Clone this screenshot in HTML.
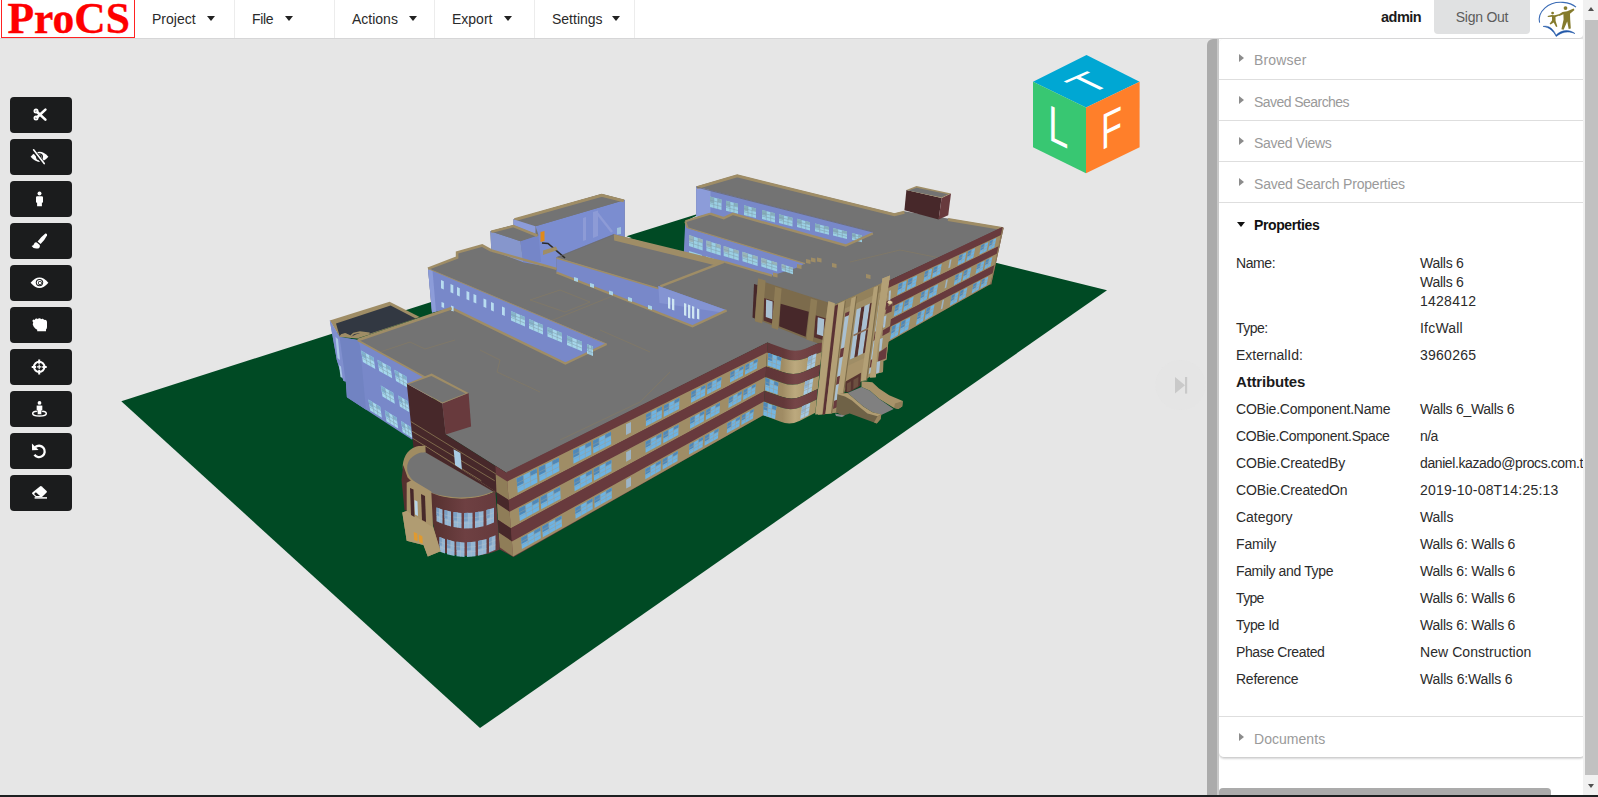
<!DOCTYPE html>
<html lang="en">
<head>
<meta charset="utf-8">
<title>ProCS</title>
<style>
html,body{margin:0;padding:0;}
body{width:1598px;height:797px;overflow:hidden;position:relative;background:#e6e6e6;
 font-family:"Liberation Sans",sans-serif;font-size:14px;color:#222;}
*{box-sizing:border-box;}
#scene{position:absolute;left:0;top:0;width:1598px;height:797px;display:block;}
/* header */
#hdr{position:absolute;left:0;top:0;width:1583px;height:39px;background:#fff;border-bottom:1px solid #d6d6d7;border-bottom-right-radius:4px;}
#logo{position:absolute;left:1px;top:-1px;width:134px;height:38.5px;border:1px solid #f22;overflow:hidden;}
#logo span{position:absolute;left:5.5px;top:-7.5px;font-family:"Liberation Serif",serif;font-weight:bold;font-size:43.5px;line-height:50px;color:#fe0000;white-space:nowrap;letter-spacing:0;-webkit-text-stroke:.35px #fe0000;}
.mi{position:absolute;top:0;height:38px;width:100px;border-right:1px solid #ececec;line-height:38px;padding-left:17px;color:#2a2a2a;font-size:14px;white-space:nowrap;}
.mi i{position:absolute;top:16px;width:0;height:0;border-left:4px solid transparent;border-right:4px solid transparent;border-top:5px solid #222;}
#admin{position:absolute;left:1381px;top:0;line-height:35px;font-size:14.5px;color:#1b1b1b;font-weight:bold;letter-spacing:-.5px;}
#signout{position:absolute;left:1434px;top:0;width:96px;height:34px;background:#e0e1e2;border-radius:0 0 4px 4px;color:#5c5c5c;text-align:center;line-height:34px;font-size:14px;letter-spacing:-.24px;}
#ulogo{position:absolute;left:1536px;top:0;width:44px;height:38px;}
/* toolbar */
.tb{position:absolute;left:10px;width:62px;height:35.5px;background:#1b1c1d;border-radius:4px;}
.tb svg{position:absolute;left:0;top:0;width:62px;height:35.5px;}
/* right panel */
#gbar{position:absolute;left:1207px;top:39px;width:10px;height:756px;background:#ababab;border-top-left-radius:6px;}
#gbar2{position:absolute;left:1217px;top:39px;width:2px;height:756px;background:#c9c9c9;}
#pwrap{position:absolute;left:1219px;top:39px;width:364px;height:756px;background:#fff;overflow:hidden;}
#acc{position:absolute;left:0;top:0;width:366px;height:719px;background:#fff;border-bottom:1px solid #d0d0d0;border-radius:5px;box-shadow:0 1px 2px rgba(34,36,38,.18);}
.at{position:absolute;left:0;width:366px;height:41px;border-top:1px solid #dedede;color:#9a9a9a;font-size:14px;line-height:44px;padding-left:35px;white-space:nowrap;}
.at i{position:absolute;left:20px;top:16px;width:0;height:0;border-top:4.5px solid transparent;border-bottom:4.5px solid transparent;border-left:5px solid #8c8c8c;}
.at.on{color:#111;font-weight:bold;font-size:14px;}
.at.on i{left:18px;top:19px;border-left:4.5px solid transparent;border-right:4.5px solid transparent;border-top:5px solid #111;border-bottom:0;}
.pr{position:absolute;left:17px;height:19px;line-height:19px;font-size:14px;color:#2b2b2b;white-space:nowrap;}
.pv{position:absolute;left:201px;height:19px;line-height:19px;font-size:14px;color:#2b2b2b;white-space:nowrap;}
#hsb{position:absolute;left:1219px;top:788px;width:332px;height:7px;background:#ababab;border-radius:4px 4px 0 0;}
/* page scrollbar */
#vsb{position:absolute;left:1583px;top:0;width:15px;height:795px;background:#f1f1f1;}
#vsb b{position:absolute;left:2px;top:20px;width:13px;height:755px;background:#c1c1c1;}
#vsb i{position:absolute;left:4.5px;width:0;height:0;border-left:3.7px solid transparent;border-right:3.7px solid transparent;}
#btm{position:absolute;left:0;top:795px;width:1598px;height:2px;background:#1d2021;}
</style>
</head>
<body>
<svg id="scene" viewBox="0 0 1598 797">
<!--SCENE-->
<polygon points="121.3,401.2 747.0,201.0 1107.0,290.3 480.0,728.1" fill="#004a24" />
<polygon points="357.7,339.9 451.7,307.9 432.0,312.5 428.0,268.4 457.1,257.3 457.1,252.3 482.2,245.3 491.3,250.3 490.3,231.2 513.4,225.2 513.4,219.2 601.7,194.1 624.8,200.1 624.8,237.0 684.0,251.3 685.3,221.2 710.0,213.7 696.3,216.0 696.3,186.6 737.2,174.8 894.4,213.6 904.4,211.2 1003.2,227.7 889.3,280.6 835.0,304.5 823.4,340.7 800.0,352.0 780.0,350.0 767.6,342.5 506.7,472.9 445.7,434.5 431.7,380.8" fill="#737373" />
<polygon points="626.5,236.3 696.0,214.4 696.0,216.0 685.3,221.2 684.0,254.0 640.0,241.0" fill="#004a24" />
<polyline points="470.0,318.0 520.0,342.0 560.0,329.0" fill="none" stroke="#8a7d5d" stroke-width="0.7" opacity="0.7"/>
<polyline points="520.0,342.0 545.0,355.0" fill="none" stroke="#8a7d5d" stroke-width="0.7" opacity="0.7"/>
<polyline points="380.0,352.0 410.0,342.0 425.0,349.0 455.0,340.0" fill="none" stroke="#8a7d5d" stroke-width="0.7" opacity="0.7"/>
<polyline points="480.0,350.0 500.0,360.0 497.0,372.0 540.0,392.0" fill="none" stroke="#8a7d5d" stroke-width="0.7" opacity="0.7"/>
<polyline points="530.0,300.0 560.0,290.0 590.0,302.0 565.0,312.0 530.0,300.0" fill="none" stroke="#8a7d5d" stroke-width="0.7" opacity="0.7"/>
<polyline points="548.0,322.0 640.0,285.0" fill="none" stroke="#8a7d5d" stroke-width="0.7" opacity="0.7"/>
<polyline points="600.0,330.0 650.0,352.0" fill="none" stroke="#8a7d5d" stroke-width="0.7" opacity="0.7"/>
<polyline points="560.0,440.0 640.0,402.0" fill="none" stroke="#8a7d5d" stroke-width="0.7" opacity="0.7"/>
<polyline points="640.0,402.0 670.0,372.0" fill="none" stroke="#8a7d5d" stroke-width="0.7" opacity="0.7"/>
<polyline points="850.0,262.0 900.0,250.0 960.0,262.0" fill="none" stroke="#8a7d5d" stroke-width="0.7" opacity="0.7"/>
<polyline points="880.0,300.0 930.0,312.0" fill="none" stroke="#8a7d5d" stroke-width="0.7" opacity="0.7"/>
<polygon points="696.3,186.6 872.8,231.7 872.8,233.5 845.7,245.3 732.7,213.7 723.7,218.2 710.1,213.7 696.3,216.5" fill="#7888c9" />
<polygon points="696.3,186.6 710.5,190.3 710.5,213.7 696.3,216.5" fill="#8c9cd9" />
<polygon points="710.0,196.6 721.5,199.5 721.5,210.0 710.0,207.1" fill="#9bd0e4" />
<polygon points="710.0,196.6 713.8,197.6 713.8,203.4 710.0,202.4" fill="#86aebc" />
<polygon points="717.7,198.6 721.5,199.5 721.5,202.7 717.7,201.7" fill="#86aebc" />
<polyline points="713.8,197.6 713.8,208.1" fill="none" stroke="#7f9aa8" stroke-width="0.5" />
<polyline points="717.7,198.6 717.7,209.1" fill="none" stroke="#7f9aa8" stroke-width="0.5" />
<polyline points="710.0,200.1 721.5,203.0" fill="none" stroke="#7f9aa8" stroke-width="0.5" />
<polyline points="710.0,203.6 721.5,206.5" fill="none" stroke="#7f9aa8" stroke-width="0.5" />
<polygon points="726.0,200.7 738.0,203.8 738.0,213.8 726.0,210.7" fill="#9bd0e4" />
<polygon points="726.0,200.7 730.0,201.7 730.0,207.2 726.0,206.2" fill="#86aebc" />
<polygon points="734.0,202.7 738.0,203.8 738.0,206.8 734.0,205.7" fill="#86aebc" />
<polyline points="730.0,201.7 730.0,211.8" fill="none" stroke="#7f9aa8" stroke-width="0.5" />
<polyline points="734.0,202.7 734.0,212.8" fill="none" stroke="#7f9aa8" stroke-width="0.5" />
<polyline points="726.0,204.0 738.0,207.1" fill="none" stroke="#7f9aa8" stroke-width="0.5" />
<polyline points="726.0,207.4 738.0,210.5" fill="none" stroke="#7f9aa8" stroke-width="0.5" />
<polygon points="744.0,205.3 756.0,208.4 756.0,218.0 744.0,214.9" fill="#9bd0e4" />
<polygon points="744.0,205.3 748.0,206.3 748.0,211.6 744.0,210.6" fill="#86aebc" />
<polygon points="752.0,207.3 756.0,208.4 756.0,211.2 752.0,210.2" fill="#86aebc" />
<polyline points="748.0,206.3 748.0,215.9" fill="none" stroke="#7f9aa8" stroke-width="0.5" />
<polyline points="752.0,207.3 752.0,216.9" fill="none" stroke="#7f9aa8" stroke-width="0.5" />
<polyline points="744.0,208.5 756.0,211.6" fill="none" stroke="#7f9aa8" stroke-width="0.5" />
<polyline points="744.0,211.7 756.0,214.8" fill="none" stroke="#7f9aa8" stroke-width="0.5" />
<polygon points="762.0,209.9 775.0,213.2 775.0,222.4 762.0,219.0" fill="#9bd0e4" />
<polygon points="762.0,209.9 766.3,211.0 766.3,216.0 762.0,214.9" fill="#86aebc" />
<polygon points="770.7,212.1 775.0,213.2 775.0,216.0 770.7,214.8" fill="#86aebc" />
<polyline points="766.3,211.0 766.3,220.1" fill="none" stroke="#7f9aa8" stroke-width="0.5" />
<polyline points="770.7,212.1 770.7,221.3" fill="none" stroke="#7f9aa8" stroke-width="0.5" />
<polyline points="762.0,212.9 775.0,216.3" fill="none" stroke="#7f9aa8" stroke-width="0.5" />
<polyline points="762.0,216.0 775.0,219.3" fill="none" stroke="#7f9aa8" stroke-width="0.5" />
<polygon points="779.0,214.2 792.5,217.7 792.5,226.4 779.0,222.9" fill="#9bd0e4" />
<polygon points="779.0,214.2 783.5,215.4 783.5,220.2 779.0,219.0" fill="#86aebc" />
<polygon points="788.0,216.5 792.5,217.7 792.5,220.3 788.0,219.1" fill="#86aebc" />
<polyline points="783.5,215.4 783.5,224.1" fill="none" stroke="#7f9aa8" stroke-width="0.5" />
<polyline points="788.0,216.5 788.0,225.2" fill="none" stroke="#7f9aa8" stroke-width="0.5" />
<polyline points="779.0,217.1 792.5,220.6" fill="none" stroke="#7f9aa8" stroke-width="0.5" />
<polyline points="779.0,220.0 792.5,223.5" fill="none" stroke="#7f9aa8" stroke-width="0.5" />
<polygon points="797.0,218.8 810.0,222.2 810.0,230.4 797.0,227.1" fill="#9bd0e4" />
<polygon points="797.0,218.8 801.3,219.9 801.3,224.5 797.0,223.4" fill="#86aebc" />
<polygon points="805.7,221.0 810.0,222.2 810.0,224.6 805.7,223.5" fill="#86aebc" />
<polyline points="801.3,219.9 801.3,228.2" fill="none" stroke="#7f9aa8" stroke-width="0.5" />
<polyline points="805.7,221.0 805.7,229.3" fill="none" stroke="#7f9aa8" stroke-width="0.5" />
<polyline points="797.0,221.6 810.0,224.9" fill="none" stroke="#7f9aa8" stroke-width="0.5" />
<polyline points="797.0,224.3 810.0,227.7" fill="none" stroke="#7f9aa8" stroke-width="0.5" />
<polygon points="815.0,223.4 829.0,227.0 829.0,234.8 815.0,231.2" fill="#9bd0e4" />
<polygon points="815.0,223.4 819.7,224.6 819.7,228.9 815.0,227.7" fill="#86aebc" />
<polygon points="824.3,225.8 829.0,227.0 829.0,229.3 824.3,228.2" fill="#86aebc" />
<polyline points="819.7,224.6 819.7,232.4" fill="none" stroke="#7f9aa8" stroke-width="0.5" />
<polyline points="824.3,225.8 824.3,233.6" fill="none" stroke="#7f9aa8" stroke-width="0.5" />
<polyline points="815.0,226.0 829.0,229.6" fill="none" stroke="#7f9aa8" stroke-width="0.5" />
<polyline points="815.0,228.6 829.0,232.2" fill="none" stroke="#7f9aa8" stroke-width="0.5" />
<polygon points="833.0,228.0 847.0,231.6 847.0,239.0 833.0,235.4" fill="#9bd0e4" />
<polygon points="833.0,228.0 837.7,229.2 837.7,233.3 833.0,232.1" fill="#86aebc" />
<polygon points="842.3,230.4 847.0,231.6 847.0,233.8 842.3,232.6" fill="#86aebc" />
<polyline points="837.7,229.2 837.7,236.6" fill="none" stroke="#7f9aa8" stroke-width="0.5" />
<polyline points="842.3,230.4 842.3,237.8" fill="none" stroke="#7f9aa8" stroke-width="0.5" />
<polyline points="833.0,230.5 847.0,234.1" fill="none" stroke="#7f9aa8" stroke-width="0.5" />
<polyline points="833.0,232.9 847.0,236.5" fill="none" stroke="#7f9aa8" stroke-width="0.5" />
<polygon points="852.0,232.9 862.0,235.4 862.0,242.3 852.0,239.8" fill="#9bd0e4" />
<polygon points="852.0,232.9 855.3,233.7 855.3,237.5 852.0,236.7" fill="#86aebc" />
<polygon points="858.7,234.6 862.0,235.4 862.0,237.5 858.7,236.7" fill="#86aebc" />
<polyline points="855.3,233.7 855.3,240.6" fill="none" stroke="#7f9aa8" stroke-width="0.5" />
<polyline points="858.7,234.6 858.7,241.5" fill="none" stroke="#7f9aa8" stroke-width="0.5" />
<polyline points="852.0,235.2 862.0,237.7" fill="none" stroke="#7f9aa8" stroke-width="0.5" />
<polyline points="852.0,237.5 862.0,240.0" fill="none" stroke="#7f9aa8" stroke-width="0.5" />
<polyline points="710.1,213.7 723.7,218.2 732.7,213.9 845.7,245.5 872.8,233.3" fill="none" stroke="#9f8d66" stroke-width="2.4" />
<polyline points="697.0,187.6 737.2,175.9 894.4,214.6 904.4,212.2" fill="none" stroke="#9f8d66" stroke-width="3" />
<polyline points="948.0,219.6 1002.0,228.6" fill="none" stroke="#9f8d66" stroke-width="3" />
<polyline points="696.3,187.0 872.8,232.0" fill="none" stroke="#6a6a72" stroke-width="0.8" />
<polygon points="685.3,221.2 687.5,228.0 805.0,263.4 796.0,268.0 771.9,275.4 725.2,261.9 683.8,253.6" fill="#7888c9" />
<polygon points="689.0,235.1 702.6,239.4 702.6,250.4 689.0,246.1" fill="#9bd0e4" />
<polygon points="689.0,235.1 693.5,236.5 693.5,242.6 689.0,241.2" fill="#9ab4b8" />
<polygon points="698.1,237.9 702.6,239.4 702.6,242.7 698.1,241.2" fill="#9ab4b8" />
<polyline points="693.5,236.5 693.5,247.5" fill="none" stroke="#7f9aa8" stroke-width="0.5" />
<polyline points="698.1,237.9 698.1,248.9" fill="none" stroke="#7f9aa8" stroke-width="0.5" />
<polyline points="689.0,238.8 702.6,243.0" fill="none" stroke="#7f9aa8" stroke-width="0.5" />
<polyline points="689.0,242.4 702.6,246.7" fill="none" stroke="#7f9aa8" stroke-width="0.5" />
<polygon points="706.4,240.5 720.7,245.0 720.7,255.5 706.4,251.0" fill="#9bd0e4" />
<polygon points="706.4,240.5 711.2,242.0 711.2,247.8 706.4,246.3" fill="#9ab4b8" />
<polygon points="715.9,243.5 720.7,245.0 720.7,248.2 715.9,246.7" fill="#9ab4b8" />
<polyline points="711.2,242.0 711.2,252.5" fill="none" stroke="#7f9aa8" stroke-width="0.5" />
<polyline points="715.9,243.5 715.9,254.0" fill="none" stroke="#7f9aa8" stroke-width="0.5" />
<polyline points="706.4,244.0 720.7,248.5" fill="none" stroke="#7f9aa8" stroke-width="0.5" />
<polyline points="706.4,247.5 720.7,252.0" fill="none" stroke="#7f9aa8" stroke-width="0.5" />
<polygon points="723.7,246.0 738.7,250.7 738.7,260.6 723.7,255.9" fill="#9bd0e4" />
<polygon points="723.7,246.0 728.7,247.5 728.7,253.0 723.7,251.4" fill="#9ab4b8" />
<polygon points="733.7,249.1 738.7,250.7 738.7,253.6 733.7,252.1" fill="#9ab4b8" />
<polyline points="728.7,247.5 728.7,257.4" fill="none" stroke="#7f9aa8" stroke-width="0.5" />
<polyline points="733.7,249.1 733.7,259.0" fill="none" stroke="#7f9aa8" stroke-width="0.5" />
<polyline points="723.7,249.3 738.7,254.0" fill="none" stroke="#7f9aa8" stroke-width="0.5" />
<polyline points="723.7,252.6 738.7,257.3" fill="none" stroke="#7f9aa8" stroke-width="0.5" />
<polygon points="742.5,251.8 757.6,256.6 757.6,265.9 742.5,261.2" fill="#9bd0e4" />
<polygon points="742.5,251.8 747.5,253.4 747.5,258.6 742.5,257.0" fill="#9ab4b8" />
<polygon points="752.6,255.0 757.6,256.6 757.6,259.4 752.6,257.8" fill="#9ab4b8" />
<polyline points="747.5,253.4 747.5,262.8" fill="none" stroke="#7f9aa8" stroke-width="0.5" />
<polyline points="752.6,255.0 752.6,264.3" fill="none" stroke="#7f9aa8" stroke-width="0.5" />
<polyline points="742.5,255.0 757.6,259.7" fill="none" stroke="#7f9aa8" stroke-width="0.5" />
<polyline points="742.5,258.1 757.6,262.8" fill="none" stroke="#7f9aa8" stroke-width="0.5" />
<polygon points="761.3,257.7 777.1,262.7 777.1,271.5 761.3,266.5" fill="#9bd0e4" />
<polygon points="761.3,257.7 766.6,259.4 766.6,264.2 761.3,262.6" fill="#9ab4b8" />
<polygon points="771.8,261.0 777.1,262.7 777.1,265.3 771.8,263.7" fill="#9ab4b8" />
<polyline points="766.6,259.4 766.6,268.2" fill="none" stroke="#7f9aa8" stroke-width="0.5" />
<polyline points="771.8,261.0 771.8,269.8" fill="none" stroke="#7f9aa8" stroke-width="0.5" />
<polyline points="761.3,260.7 777.1,265.6" fill="none" stroke="#7f9aa8" stroke-width="0.5" />
<polyline points="761.3,263.6 777.1,268.5" fill="none" stroke="#7f9aa8" stroke-width="0.5" />
<polygon points="781.7,264.1 793.0,267.7 793.0,274.2 781.7,270.6" fill="#9bd0e4" />
<polygon points="781.7,264.1 785.5,265.3 785.5,268.9 781.7,267.7" fill="#9ab4b8" />
<polygon points="789.2,266.5 793.0,267.7 793.0,269.6 789.2,268.4" fill="#9ab4b8" />
<polyline points="785.5,265.3 785.5,271.8" fill="none" stroke="#7f9aa8" stroke-width="0.5" />
<polyline points="789.2,266.5 789.2,273.0" fill="none" stroke="#7f9aa8" stroke-width="0.5" />
<polyline points="781.7,266.3 793.0,269.8" fill="none" stroke="#7f9aa8" stroke-width="0.5" />
<polyline points="781.7,268.4 793.0,272.0" fill="none" stroke="#7f9aa8" stroke-width="0.5" />
<polygon points="689.0,251.0 702.0,255.1 702.0,258.1 689.0,254.0" fill="#9bd0e4" />
<polygon points="706.0,256.3 716.0,259.5 716.0,262.5 706.0,259.3" fill="#9bd0e4" />
<polyline points="685.3,221.5 687.5,227.8" fill="none" stroke="#9f8d66" stroke-width="2" />
<polyline points="687.5,227.8 805.0,263.6" fill="none" stroke="#9f8d66" stroke-width="1.2" />
<polyline points="685.3,221.3 710.0,213.7" fill="none" stroke="#9f8d66" stroke-width="2" />
<polygon points="806.0,259.0 810.5,260.0 810.5,264.0 806.0,263.0" fill="#9f8d66" />
<polygon points="811.0,257.5 815.5,258.5 815.5,262.5 811.0,261.5" fill="#9f8d66" />
<polygon points="817.0,257.5 821.5,258.5 821.5,262.5 817.0,261.5" fill="#9f8d66" />
<polygon points="797.0,264.0 801.5,265.0 801.5,269.0 797.0,268.0" fill="#9f8d66" />
<polygon points="773.0,272.5 777.5,273.5 777.5,277.5 773.0,276.5" fill="#9f8d66" />
<polygon points="832.0,263.0 836.5,264.0 836.5,268.0 832.0,267.0" fill="#9f8d66" />
<polygon points="866.0,274.0 870.5,275.0 870.5,279.0 866.0,278.0" fill="#9f8d66" />
<polygon points="777.0,287.0 781.5,288.0 781.5,292.0 777.0,291.0" fill="#9f8d66" />
<polygon points="535.5,226.2 624.8,200.1 624.8,237.0 613.8,234.2 556.5,257.3 556.5,268.4 523.4,262.3 520.4,241.2 538.5,235.2" fill="#7b8dd0" />
<polygon points="513.4,219.2 601.7,194.1 624.8,200.1 535.5,226.2" fill="#737373" />
<polyline points="514.5,219.8 601.7,195.2 623.8,200.9" fill="none" stroke="#9f8d66" stroke-width="3" />
<polygon points="513.4,219.2 535.5,226.2 535.5,234.0 513.4,226.0" fill="#8c9cd9" />
<polygon points="490.3,231.2 520.4,241.2 523.4,262.3 491.3,250.3" fill="#8696cc" />
<polygon points="520.4,241.2 538.5,235.2 541.0,262.0 523.4,262.3" fill="#7586c8" />
<polygon points="490.3,231.2 513.4,225.2 538.5,235.2 520.4,241.2" fill="#737373" />
<polyline points="491.3,231.8 513.4,226.1 537.5,235.7" fill="none" stroke="#9f8d66" stroke-width="2.6" />
<polygon points="593.0,212.0 598.0,210.5 598.0,236.0 593.0,238.0" fill="#8d9bd6" />
<polygon points="583.0,218.0 586.0,217.0 586.0,240.0 583.0,241.0" fill="#8d9bd6" />
<polyline points="597.0,213.0 612.0,232.0" fill="none" stroke="#8d9bd6" stroke-width="2.5" />
<polygon points="540.5,232.0 544.5,231.0 544.5,241.0 540.5,242.0" fill="#e08a1c" />
<polyline points="542.0,243.0 548.0,243.5 565.0,258.0" fill="none" stroke="#2a2a2a" stroke-width="1.6" />
<polygon points="543.0,250.5 556.0,246.5 557.5,250.0 543.0,255.0" fill="#9f8d66" />
<polygon points="617.0,228.0 621.0,227.0 621.0,234.0 617.0,234.5" fill="#9fc0dc" />
<polygon points="613.8,234.2 725.0,261.3 716.0,265.5 614.2,240.5" fill="#9f8d66" />
<polyline points="613.8,234.5 556.5,257.5" fill="none" stroke="#6a6a72" stroke-width="0.6" />
<polyline points="724.6,261.6 660.3,286.4" fill="none" stroke="#9f8d66" stroke-width="2.4" />
<polyline points="725.2,262.0 771.9,275.6" fill="none" stroke="#9f8d66" stroke-width="2.2" />
<polygon points="556.5,257.5 658.3,288.2 658.3,286.0 726.6,310.3 692.5,326.3 556.5,272.5" fill="#7888c9" />
<polygon points="658.3,286.0 726.6,310.3 722.0,312.5 659.5,303.0" fill="#8494d2" />
<polyline points="556.5,258.0 658.3,288.5" fill="none" stroke="#9f8d66" stroke-width="1.4" />
<polyline points="556.5,272.5 692.5,326.3 726.6,310.3" fill="none" stroke="#9f8d66" stroke-width="2.4" />
<polygon points="574.0,277.0 578.0,278.3 578.0,282.0 574.0,280.7" fill="#a8d3e6" />
<polygon points="590.0,283.0 594.0,284.3 594.0,288.0 590.0,286.7" fill="#a8d3e6" />
<polygon points="609.0,290.5 613.0,291.8 613.0,295.5 609.0,294.2" fill="#a8d3e6" />
<polygon points="628.0,297.0 632.0,298.3 632.0,302.0 628.0,300.7" fill="#a8d3e6" />
<polygon points="648.0,305.0 652.0,306.3 652.0,310.0 648.0,308.7" fill="#a8d3e6" />
<polygon points="668.0,297.0 670.3,297.8 670.3,309.0 668.0,308.2" fill="#cfe6f2" />
<polygon points="672.0,298.5 674.3,299.3 674.3,310.5 672.0,309.7" fill="#cfe6f2" />
<polygon points="684.0,303.0 686.3,303.8 686.3,316.0 684.0,315.2" fill="#cfe6f2" />
<polygon points="688.0,304.5 690.3,305.3 690.3,318.5 688.0,317.7" fill="#cfe6f2" />
<polygon points="692.0,306.0 694.3,306.8 694.3,319.0 692.0,318.2" fill="#cfe6f2" />
<polygon points="697.0,308.5 699.3,309.3 699.3,319.5 697.0,318.7" fill="#cfe6f2" />
<polyline points="491.3,250.5 556.5,268.8" fill="none" stroke="#9f8d66" stroke-width="2.4" />
<polygon points="428.0,268.4 606.6,343.8 565.4,363.3 451.7,307.9 432.0,312.5" fill="#7888c9" />
<polygon points="428.0,268.4 432.5,270.3 436.0,311.5 432.0,312.5" fill="#8c9cd9" />
<polyline points="428.0,268.6 606.6,344.0" fill="none" stroke="#9f8d66" stroke-width="0.9" />
<polyline points="606.6,344.0 565.4,363.5 451.7,308.2" fill="none" stroke="#9f8d66" stroke-width="2.4" />
<polyline points="428.0,268.6 457.1,257.5 457.1,252.5 482.2,245.5 491.3,250.5" fill="none" stroke="#9f8d66" stroke-width="2.6" />
<polygon points="441.0,280.0 443.8,281.2 443.8,289.5 441.0,288.3" fill="#b8dcf0" />
<polygon points="450.5,284.0 453.3,285.2 453.3,293.5 450.5,292.3" fill="#b8dcf0" />
<polygon points="457.0,287.0 459.8,288.2 459.8,296.5 457.0,295.3" fill="#b8dcf0" />
<polygon points="466.5,291.0 469.3,292.2 469.3,300.5 466.5,299.3" fill="#b8dcf0" />
<polygon points="473.5,294.0 476.3,295.2 476.3,303.5 473.5,302.3" fill="#b8dcf0" />
<polygon points="483.5,298.5 486.3,299.7 486.3,308.0 483.5,306.8" fill="#b8dcf0" />
<polygon points="491.0,302.0 493.8,303.2 493.8,311.5 491.0,310.3" fill="#b8dcf0" />
<polygon points="502.0,306.5 504.8,307.7 504.8,316.0 502.0,314.8" fill="#b8dcf0" />
<polygon points="441.5,302.0 444.1,303.1 444.1,308.0 441.5,307.0" fill="#b8dcf0" />
<polygon points="451.0,305.5 453.6,306.6 453.6,311.5 451.0,310.5" fill="#b8dcf0" />
<polygon points="511.0,311.0 525.0,316.9 525.0,326.4 511.0,320.5" fill="#a6d6ea" />
<polygon points="511.0,311.0 515.7,313.0 515.7,318.2 511.0,316.2" fill="#86b4cc" />
<polygon points="520.3,314.9 525.0,316.9 525.0,319.7 520.3,317.8" fill="#86b4cc" />
<polyline points="515.7,313.0 515.7,322.5" fill="none" stroke="#7f9aa8" stroke-width="0.5" />
<polyline points="520.3,314.9 520.3,324.4" fill="none" stroke="#7f9aa8" stroke-width="0.5" />
<polyline points="511.0,314.2 525.0,320.0" fill="none" stroke="#7f9aa8" stroke-width="0.5" />
<polyline points="511.0,317.3 525.0,323.2" fill="none" stroke="#7f9aa8" stroke-width="0.5" />
<polygon points="529.0,319.0 543.0,324.9 543.0,334.4 529.0,328.5" fill="#a6d6ea" />
<polygon points="529.0,319.0 533.7,321.0 533.7,326.2 529.0,324.2" fill="#86b4cc" />
<polygon points="538.3,322.9 543.0,324.9 543.0,327.7 538.3,325.8" fill="#86b4cc" />
<polyline points="533.7,321.0 533.7,330.5" fill="none" stroke="#7f9aa8" stroke-width="0.5" />
<polyline points="538.3,322.9 538.3,332.4" fill="none" stroke="#7f9aa8" stroke-width="0.5" />
<polyline points="529.0,322.2 543.0,328.0" fill="none" stroke="#7f9aa8" stroke-width="0.5" />
<polyline points="529.0,325.3 543.0,331.2" fill="none" stroke="#7f9aa8" stroke-width="0.5" />
<polygon points="547.5,327.0 562.0,333.1 562.0,342.6 547.5,336.5" fill="#a6d6ea" />
<polygon points="547.5,327.0 552.3,329.0 552.3,334.3 547.5,332.2" fill="#86b4cc" />
<polygon points="557.2,331.1 562.0,333.1 562.0,335.9 557.2,333.9" fill="#86b4cc" />
<polyline points="552.3,329.0 552.3,338.5" fill="none" stroke="#7f9aa8" stroke-width="0.5" />
<polyline points="557.2,331.1 557.2,340.6" fill="none" stroke="#7f9aa8" stroke-width="0.5" />
<polyline points="547.5,330.2 562.0,336.3" fill="none" stroke="#7f9aa8" stroke-width="0.5" />
<polyline points="547.5,333.3 562.0,339.4" fill="none" stroke="#7f9aa8" stroke-width="0.5" />
<polygon points="567.0,335.5 582.0,341.8 582.0,351.3 567.0,345.0" fill="#a6d6ea" />
<polygon points="567.0,335.5 572.0,337.6 572.0,342.8 567.0,340.7" fill="#86b4cc" />
<polygon points="577.0,339.7 582.0,341.8 582.0,344.7 577.0,342.6" fill="#86b4cc" />
<polyline points="572.0,337.6 572.0,347.1" fill="none" stroke="#7f9aa8" stroke-width="0.5" />
<polyline points="577.0,339.7 577.0,349.2" fill="none" stroke="#7f9aa8" stroke-width="0.5" />
<polyline points="567.0,338.7 582.0,345.0" fill="none" stroke="#7f9aa8" stroke-width="0.5" />
<polyline points="567.0,341.8 582.0,348.1" fill="none" stroke="#7f9aa8" stroke-width="0.5" />
<polygon points="587.0,344.0 593.0,346.5 593.0,356.0 587.0,353.5" fill="#a6d6ea" />
<polygon points="587.0,344.0 589.0,344.8 589.0,350.1 587.0,349.2" fill="#86b4cc" />
<polygon points="591.0,345.7 593.0,346.5 593.0,349.4 591.0,348.5" fill="#86b4cc" />
<polyline points="589.0,344.8 589.0,354.3" fill="none" stroke="#7f9aa8" stroke-width="0.5" />
<polyline points="591.0,345.7 591.0,355.2" fill="none" stroke="#7f9aa8" stroke-width="0.5" />
<polyline points="587.0,347.2 593.0,349.7" fill="none" stroke="#7f9aa8" stroke-width="0.5" />
<polyline points="587.0,350.3 593.0,352.9" fill="none" stroke="#7f9aa8" stroke-width="0.5" />
<polygon points="329.8,320.5 389.6,301.7 419.7,317.0 369.6,334.5 357.0,338.5 339.7,337.1" fill="#9f8d66" />
<polygon points="336.0,323.6 390.6,305.6 415.6,318.4 369.6,333.8 363.0,332.0 357.0,334.0 351.5,336.5 346.0,333.5 341.5,334.5 339.8,336.5" fill="#323842" />
<polygon points="329.8,320.5 339.7,337.1 357.7,339.9 431.7,380.8 433.0,430.0 411.8,439.6 346.9,397.3 345.8,381.4 343.5,380.9 336.8,360.0" fill="#7888c9" />
<polyline points="339.7,337.5 341.5,334.8 345.0,333.8 350.0,336.0" fill="none" stroke="#9f8d66" stroke-width="1.4" />
<polyline points="350.0,336.8 353.5,333.5 360.0,332.0 369.6,333.2" fill="none" stroke="#9f8d66" stroke-width="1.6" />
<polygon points="329.8,320.5 339.7,337.1 345.8,381.4 343.5,380.9 336.8,360.0" fill="#7f8fce" />
<polygon points="339.7,337.1 357.7,339.9 360.0,346.0 366.0,409.8 346.9,397.3 345.8,381.4" fill="#7183c2" />
<polyline points="357.7,340.2 451.7,308.2" fill="none" stroke="#9f8d66" stroke-width="3" />
<polyline points="357.7,340.2 431.7,381.0" fill="none" stroke="#9f8d66" stroke-width="1.8" />
<polygon points="361.1,350.6 373.5,357.6 375.3,368.9 362.9,361.9" fill="#a6d8ee" />
<polygon points="361.1,350.6 365.2,352.9 366.2,359.1 362.1,356.8" fill="#7fb0d0" />
<polygon points="369.4,355.3 373.5,357.6 374.0,361.0 369.9,358.7" fill="#7fb0d0" />
<polyline points="365.2,352.9 367.0,364.2" fill="none" stroke="#7f9aa8" stroke-width="0.5" />
<polyline points="369.4,355.3 371.2,366.6" fill="none" stroke="#7f9aa8" stroke-width="0.5" />
<polyline points="361.7,354.4 374.1,361.4" fill="none" stroke="#7f9aa8" stroke-width="0.5" />
<polyline points="362.3,358.1 374.7,365.1" fill="none" stroke="#7f9aa8" stroke-width="0.5" />
<polygon points="377.5,359.7 390.5,367.0 392.2,378.3 379.2,371.0" fill="#a6d8ee" />
<polygon points="377.5,359.7 381.8,362.1 382.8,368.4 378.5,365.9" fill="#7fb0d0" />
<polygon points="386.2,364.6 390.5,367.0 391.0,370.4 386.7,368.0" fill="#7fb0d0" />
<polyline points="381.8,362.1 383.5,373.4" fill="none" stroke="#7f9aa8" stroke-width="0.5" />
<polyline points="386.2,364.6 387.9,375.9" fill="none" stroke="#7f9aa8" stroke-width="0.5" />
<polyline points="378.1,363.5 391.1,370.8" fill="none" stroke="#7f9aa8" stroke-width="0.5" />
<polyline points="378.7,367.2 391.6,374.6" fill="none" stroke="#7f9aa8" stroke-width="0.5" />
<polygon points="394.4,369.8 406.3,376.5 407.9,387.8 396.0,381.1" fill="#a6d8ee" />
<polygon points="394.4,369.8 398.4,372.0 399.3,378.3 395.3,376.0" fill="#7fb0d0" />
<polygon points="402.3,374.3 406.3,376.5 406.8,379.9 402.8,377.7" fill="#7fb0d0" />
<polyline points="398.4,372.0 400.0,383.3" fill="none" stroke="#7f9aa8" stroke-width="0.5" />
<polyline points="402.3,374.3 403.9,385.6" fill="none" stroke="#7f9aa8" stroke-width="0.5" />
<polyline points="394.9,373.6 406.8,380.3" fill="none" stroke="#7f9aa8" stroke-width="0.5" />
<polyline points="395.5,377.3 407.3,384.0" fill="none" stroke="#7f9aa8" stroke-width="0.5" />
<polygon points="380.8,385.4 393.2,392.8 394.8,403.8 382.5,396.4" fill="#a6d8ee" />
<polygon points="380.8,385.4 384.9,387.9 385.9,393.9 381.7,391.4" fill="#7fb0d0" />
<polygon points="389.1,390.3 393.2,392.8 393.7,396.1 389.6,393.6" fill="#7fb0d0" />
<polyline points="384.9,387.9 386.6,398.9" fill="none" stroke="#7f9aa8" stroke-width="0.5" />
<polyline points="389.1,390.3 390.7,401.3" fill="none" stroke="#7f9aa8" stroke-width="0.5" />
<polyline points="381.4,389.1 393.7,396.4" fill="none" stroke="#7f9aa8" stroke-width="0.5" />
<polyline points="381.9,392.7 394.3,400.1" fill="none" stroke="#7f9aa8" stroke-width="0.5" />
<polygon points="398.3,395.6 407.9,401.3 409.4,412.3 399.9,406.6" fill="#a6d8ee" />
<polygon points="398.3,395.6 401.5,397.5 402.4,403.5 399.2,401.7" fill="#7fb0d0" />
<polygon points="404.7,399.4 407.9,401.3 408.4,404.6 405.2,402.7" fill="#7fb0d0" />
<polyline points="401.5,397.5 403.1,408.5" fill="none" stroke="#7f9aa8" stroke-width="0.5" />
<polyline points="404.7,399.4 406.2,410.4" fill="none" stroke="#7f9aa8" stroke-width="0.5" />
<polyline points="398.8,399.3 408.4,405.0" fill="none" stroke="#7f9aa8" stroke-width="0.5" />
<polyline points="399.4,402.9 408.9,408.6" fill="none" stroke="#7f9aa8" stroke-width="0.5" />
<polygon points="368.4,399.5 380.2,406.8 381.9,417.8 370.2,410.5" fill="#a6d8ee" />
<polygon points="368.4,399.5 372.3,401.9 373.3,408.0 369.4,405.6" fill="#7fb0d0" />
<polygon points="376.3,404.4 380.2,406.8 380.7,410.1 376.8,407.7" fill="#7fb0d0" />
<polyline points="372.3,401.9 374.1,412.9" fill="none" stroke="#7f9aa8" stroke-width="0.5" />
<polyline points="376.3,404.4 378.0,415.4" fill="none" stroke="#7f9aa8" stroke-width="0.5" />
<polyline points="369.0,403.2 380.8,410.5" fill="none" stroke="#7f9aa8" stroke-width="0.5" />
<polyline points="369.6,406.8 381.3,414.2" fill="none" stroke="#7f9aa8" stroke-width="0.5" />
<polygon points="384.8,410.2 396.6,417.5 398.2,428.5 386.5,421.2" fill="#a6d8ee" />
<polygon points="384.8,410.2 388.7,412.6 389.7,418.7 385.7,416.2" fill="#7fb0d0" />
<polygon points="392.7,415.1 396.6,417.5 397.1,420.8 393.2,418.4" fill="#7fb0d0" />
<polyline points="388.7,412.6 390.4,423.6" fill="none" stroke="#7f9aa8" stroke-width="0.5" />
<polyline points="392.7,415.1 394.3,426.1" fill="none" stroke="#7f9aa8" stroke-width="0.5" />
<polyline points="385.4,413.9 397.1,421.2" fill="none" stroke="#7f9aa8" stroke-width="0.5" />
<polyline points="385.9,417.5 397.7,424.9" fill="none" stroke="#7f9aa8" stroke-width="0.5" />
<polygon points="401.1,421.0 410.7,427.0 412.2,438.0 402.7,432.0" fill="#a6d8ee" />
<polygon points="401.1,421.0 404.3,423.0 405.2,429.0 402.0,427.1" fill="#7fb0d0" />
<polygon points="407.5,425.0 410.7,427.0 411.2,430.3 408.0,428.3" fill="#7fb0d0" />
<polyline points="404.3,423.0 405.9,434.0" fill="none" stroke="#7f9aa8" stroke-width="0.5" />
<polyline points="407.5,425.0 409.1,436.0" fill="none" stroke="#7f9aa8" stroke-width="0.5" />
<polyline points="401.6,424.7 411.2,430.6" fill="none" stroke="#7f9aa8" stroke-width="0.5" />
<polyline points="402.2,428.3 411.7,434.3" fill="none" stroke="#7f9aa8" stroke-width="0.5" />
<polygon points="335.5,337.0 338.0,339.0 340.0,360.0 337.5,358.0" fill="#a9c6e6" />
<polygon points="339.0,365.0 341.0,366.5 342.5,378.0 340.5,377.0" fill="#a9c6e6" />
<polygon points="906.4,190.1 941.6,198.1 938.6,219.6 904.4,210.2" fill="#47282a" />
<polygon points="941.6,198.1 951.0,193.5 948.2,215.2 938.6,219.6" fill="#683a3d" />
<polygon points="906.4,190.1 916.5,186.1 951.0,193.5 941.6,198.1" fill="#9f8d66" />
<polygon points="908.5,190.4 916.6,187.7 948.0,194.3 941.4,197.3" fill="#737373" />
<polygon points="406.8,383.7 442.3,403.5 445.7,434.5 506.7,472.9 507.5,481.0 495.5,493.0 425.7,452.4 425.4,446.4 413.5,448.0" fill="#47282a" />
<polygon points="442.3,403.5 468.6,393.1 471.1,426.6 445.7,434.5" fill="#683a3d" />
<polygon points="406.8,383.7 431.6,373.5 468.6,393.1 442.3,403.5" fill="#9f8d66" />
<polygon points="408.5,384.2 431.4,376.0 465.5,393.6 442.4,402.6" fill="#737373" />
<polyline points="410.7,421.5 496.0,474.0" fill="none" stroke="#8b7954" stroke-width="0.8" />
<polyline points="411.9,431.1 494.8,480.8" fill="none" stroke="#8b7954" stroke-width="0.8" />
<polyline points="413.0,438.5 481.3,480.8" fill="none" stroke="#8b7954" stroke-width="0.8" />
<polygon points="453.6,449.2 460.4,453.1 462.1,471.2 455.3,467.2" fill="#a9cbe4" />
<polygon points="495.4,465.8 506.7,472.9 767.6,342.5 763.2,415.3 513.5,557.0 499.8,549.6" fill="#683a3d" />
<polygon points="495.7,474.3 507.3,481.4 508.7,500.0 496.5,492.2" fill="#8f7d58" />
<polygon points="496.5,492.2 508.7,500.0 509.6,511.7 497.1,503.6" fill="#47282a" />
<polygon points="497.1,503.6 509.6,511.7 510.9,528.3 497.9,519.7" fill="#8f7d58" />
<polygon points="497.9,519.7 510.9,528.3 511.9,541.4 498.6,532.4" fill="#47282a" />
<polygon points="498.6,532.4 511.9,541.4 513.1,556.6 499.6,547.2" fill="#8f7d58" />
<polygon points="506.6,472.1 767.6,342.5 767.0,352.6 507.3,481.4" fill="#683a3d" />
<polygon points="507.3,481.4 767.0,352.6 766.1,366.4 508.7,500.0" fill="#9f8d66" />
<polygon points="508.7,500.0 766.1,366.4 765.4,377.0 509.6,511.7" fill="#683a3d" />
<polygon points="509.6,511.7 765.4,377.0 764.5,390.9 510.9,528.3" fill="#9f8d66" />
<polygon points="510.9,528.3 764.5,390.9 763.9,401.5 511.9,541.4" fill="#683a3d" />
<polygon points="511.9,541.4 763.9,401.5 763.2,415.3 513.1,556.6" fill="#9f8d66" />
<polygon points="516.6,478.6 536.7,468.6 537.5,482.4 517.7,492.7" fill="#6db3e3" />
<polygon points="516.6,478.6 523.3,475.3 523.9,483.0 517.2,486.4" fill="#4f88b8" />
<polygon points="530.0,471.9 536.7,468.6 537.0,472.8 530.3,476.1" fill="#4f88b8" />
<polyline points="523.3,475.3 524.3,489.3" fill="none" stroke="#9a9c92" stroke-width="0.5" />
<polyline points="530.0,471.9 530.9,485.9" fill="none" stroke="#9a9c92" stroke-width="0.5" />
<polyline points="517.0,483.3 537.0,473.2" fill="none" stroke="#9a9c92" stroke-width="0.5" />
<polyline points="517.3,488.0 537.3,477.8" fill="none" stroke="#9a9c92" stroke-width="0.5" />
<polygon points="538.7,467.6 558.8,457.7 559.4,471.1 539.5,481.4" fill="#6db3e3" />
<polygon points="538.7,467.6 545.4,464.3 545.8,471.8 539.2,475.2" fill="#4f88b8" />
<polygon points="552.1,461.0 558.8,457.7 559.0,461.7 552.3,465.0" fill="#4f88b8" />
<polyline points="545.4,464.3 546.2,478.0" fill="none" stroke="#9a9c92" stroke-width="0.5" />
<polyline points="552.1,461.0 552.8,474.5" fill="none" stroke="#9a9c92" stroke-width="0.5" />
<polyline points="539.0,472.2 559.0,462.1" fill="none" stroke="#9a9c92" stroke-width="0.5" />
<polyline points="539.3,476.8 559.2,466.6" fill="none" stroke="#9a9c92" stroke-width="0.5" />
<polygon points="573.1,450.6 591.0,441.7 591.4,454.5 573.5,463.7" fill="#6db3e3" />
<polygon points="573.1,450.6 579.1,447.6 579.3,454.8 573.3,457.8" fill="#4f88b8" />
<polygon points="585.1,444.6 591.0,441.7 591.1,445.5 585.2,448.5" fill="#4f88b8" />
<polyline points="579.1,447.6 579.5,460.7" fill="none" stroke="#9a9c92" stroke-width="0.5" />
<polyline points="585.1,444.6 585.4,457.6" fill="none" stroke="#9a9c92" stroke-width="0.5" />
<polyline points="573.2,455.0 591.2,445.9" fill="none" stroke="#9a9c92" stroke-width="0.5" />
<polyline points="573.4,459.4 591.3,450.2" fill="none" stroke="#9a9c92" stroke-width="0.5" />
<polygon points="593.0,440.7 611.0,431.8 611.2,444.2 593.3,453.5" fill="#6db3e3" />
<polygon points="593.0,440.7 599.0,437.7 599.2,444.7 593.2,447.7" fill="#4f88b8" />
<polygon points="605.0,434.7 611.0,431.8 611.1,435.5 605.1,438.5" fill="#4f88b8" />
<polyline points="599.0,437.7 599.3,450.4" fill="none" stroke="#9a9c92" stroke-width="0.5" />
<polyline points="605.0,434.7 605.2,447.3" fill="none" stroke="#9a9c92" stroke-width="0.5" />
<polyline points="593.1,444.9 611.1,435.9" fill="none" stroke="#9a9c92" stroke-width="0.5" />
<polyline points="593.2,449.2 611.1,440.1" fill="none" stroke="#9a9c92" stroke-width="0.5" />
<polygon points="646.0,414.4 662.0,406.5 661.7,418.0 645.9,426.2" fill="#6db3e3" />
<polygon points="646.0,414.4 651.3,411.8 651.2,418.2 645.9,420.9" fill="#4f88b8" />
<polygon points="656.6,409.1 662.0,406.5 661.9,409.9 656.6,412.6" fill="#4f88b8" />
<polyline points="651.3,411.8 651.2,423.5" fill="none" stroke="#9a9c92" stroke-width="0.5" />
<polyline points="656.6,409.1 656.4,420.7" fill="none" stroke="#9a9c92" stroke-width="0.5" />
<polyline points="645.9,418.3 661.9,410.3" fill="none" stroke="#9a9c92" stroke-width="0.5" />
<polyline points="645.9,422.3 661.8,414.1" fill="none" stroke="#9a9c92" stroke-width="0.5" />
<polygon points="664.0,405.5 679.4,397.8 679.1,409.0 663.7,416.9" fill="#6db3e3" />
<polygon points="664.0,405.5 669.1,402.9 669.0,409.2 663.8,411.8" fill="#4f88b8" />
<polygon points="674.3,400.4 679.4,397.8 679.3,401.2 674.2,403.8" fill="#4f88b8" />
<polyline points="669.1,402.9 668.8,414.3" fill="none" stroke="#9a9c92" stroke-width="0.5" />
<polyline points="674.3,400.4 674.0,411.6" fill="none" stroke="#9a9c92" stroke-width="0.5" />
<polyline points="663.9,409.3 679.3,401.5" fill="none" stroke="#9a9c92" stroke-width="0.5" />
<polyline points="663.8,413.1 679.2,405.2" fill="none" stroke="#9a9c92" stroke-width="0.5" />
<polygon points="691.4,391.9 705.5,384.9 705.0,395.5 691.0,402.8" fill="#6db3e3" />
<polygon points="691.4,391.9 696.1,389.6 695.9,395.5 691.2,397.9" fill="#4f88b8" />
<polygon points="700.8,387.2 705.5,384.9 705.4,388.1 700.7,390.4" fill="#4f88b8" />
<polyline points="696.1,389.6 695.7,400.3" fill="none" stroke="#9a9c92" stroke-width="0.5" />
<polyline points="700.8,387.2 700.3,397.9" fill="none" stroke="#9a9c92" stroke-width="0.5" />
<polyline points="691.3,395.5 705.3,388.4" fill="none" stroke="#9a9c92" stroke-width="0.5" />
<polyline points="691.2,399.1 705.2,392.0" fill="none" stroke="#9a9c92" stroke-width="0.5" />
<polygon points="707.5,383.9 721.5,377.0 720.9,387.3 707.0,394.5" fill="#6db3e3" />
<polygon points="707.5,383.9 712.2,381.6 711.9,387.4 707.2,389.7" fill="#4f88b8" />
<polygon points="716.8,379.3 721.5,377.0 721.3,380.1 716.7,382.4" fill="#4f88b8" />
<polyline points="712.2,381.6 711.6,392.1" fill="none" stroke="#9a9c92" stroke-width="0.5" />
<polyline points="716.8,379.3 716.3,389.7" fill="none" stroke="#9a9c92" stroke-width="0.5" />
<polyline points="707.3,387.4 721.3,380.4" fill="none" stroke="#9a9c92" stroke-width="0.5" />
<polyline points="707.2,390.9 721.1,383.8" fill="none" stroke="#9a9c92" stroke-width="0.5" />
<polygon points="730.6,372.5 743.6,366.0 742.9,375.8 730.0,382.6" fill="#6db3e3" />
<polygon points="730.6,372.5 734.9,370.3 734.6,375.8 730.2,378.0" fill="#4f88b8" />
<polygon points="739.2,368.2 743.6,366.0 743.4,369.0 739.0,371.1" fill="#4f88b8" />
<polyline points="734.9,370.3 734.3,380.3" fill="none" stroke="#9a9c92" stroke-width="0.5" />
<polyline points="739.2,368.2 738.6,378.1" fill="none" stroke="#9a9c92" stroke-width="0.5" />
<polyline points="730.4,375.8 743.3,369.3" fill="none" stroke="#9a9c92" stroke-width="0.5" />
<polyline points="730.2,379.2 743.1,372.6" fill="none" stroke="#9a9c92" stroke-width="0.5" />
<polygon points="745.6,365.0 757.7,359.0 756.9,368.6 744.9,374.8" fill="#6db3e3" />
<polygon points="745.6,365.0 749.6,363.0 749.2,368.4 745.2,370.4" fill="#4f88b8" />
<polygon points="753.6,361.0 757.7,359.0 757.4,361.9 753.4,363.9" fill="#4f88b8" />
<polyline points="749.6,363.0 748.9,372.7" fill="none" stroke="#9a9c92" stroke-width="0.5" />
<polyline points="753.6,361.0 752.9,370.7" fill="none" stroke="#9a9c92" stroke-width="0.5" />
<polyline points="745.3,368.3 757.4,362.2" fill="none" stroke="#9a9c92" stroke-width="0.5" />
<polyline points="745.1,371.6 757.2,365.4" fill="none" stroke="#9a9c92" stroke-width="0.5" />
<polygon points="626.0,424.3 631.0,421.9 631.0,432.4 626.0,435.0" fill="#9cb4c6" />
<polygon points="518.9,508.6 538.5,498.3 539.2,510.3 519.8,520.9" fill="#6db3e3" />
<polygon points="518.9,508.6 525.4,505.2 525.9,511.9 519.4,515.4" fill="#4f88b8" />
<polygon points="532.0,501.7 538.5,498.3 538.7,501.9 532.2,505.4" fill="#4f88b8" />
<polyline points="525.4,505.2 526.3,517.4" fill="none" stroke="#9a9c92" stroke-width="0.5" />
<polyline points="532.0,501.7 532.8,513.9" fill="none" stroke="#9a9c92" stroke-width="0.5" />
<polyline points="519.2,512.7 538.8,502.3" fill="none" stroke="#9a9c92" stroke-width="0.5" />
<polyline points="519.5,516.8 539.0,506.3" fill="none" stroke="#9a9c92" stroke-width="0.5" />
<polygon points="540.5,497.2 560.1,486.9 560.7,498.7 541.2,509.3" fill="#6db3e3" />
<polygon points="540.5,497.2 547.0,493.8 547.4,500.4 540.9,503.9" fill="#4f88b8" />
<polygon points="553.6,490.3 560.1,486.9 560.3,490.4 553.8,493.9" fill="#4f88b8" />
<polyline points="547.0,493.8 547.7,505.8" fill="none" stroke="#9a9c92" stroke-width="0.5" />
<polyline points="553.6,490.3 554.2,502.3" fill="none" stroke="#9a9c92" stroke-width="0.5" />
<polyline points="540.7,501.3 560.3,490.8" fill="none" stroke="#9a9c92" stroke-width="0.5" />
<polyline points="540.9,505.3 560.5,494.8" fill="none" stroke="#9a9c92" stroke-width="0.5" />
<polygon points="574.1,479.5 591.8,470.2 592.0,481.7 574.6,491.2" fill="#6db3e3" />
<polygon points="574.1,479.5 580.0,476.4 580.2,482.8 574.4,485.9" fill="#4f88b8" />
<polygon points="585.9,473.3 591.8,470.2 591.8,473.7 586.0,476.8" fill="#4f88b8" />
<polyline points="580.0,476.4 580.4,488.1" fill="none" stroke="#9a9c92" stroke-width="0.5" />
<polyline points="585.9,473.3 586.2,484.9" fill="none" stroke="#9a9c92" stroke-width="0.5" />
<polyline points="574.3,483.4 591.9,474.1" fill="none" stroke="#9a9c92" stroke-width="0.5" />
<polyline points="574.4,487.3 592.0,477.9" fill="none" stroke="#9a9c92" stroke-width="0.5" />
<polygon points="593.7,469.2 611.4,459.9 611.5,471.2 594.0,480.7" fill="#6db3e3" />
<polygon points="593.7,469.2 599.6,466.1 599.7,472.4 593.9,475.5" fill="#4f88b8" />
<polygon points="605.5,463.0 611.4,459.9 611.4,463.3 605.5,466.4" fill="#4f88b8" />
<polyline points="599.6,466.1 599.8,477.5" fill="none" stroke="#9a9c92" stroke-width="0.5" />
<polyline points="605.5,463.0 605.7,474.4" fill="none" stroke="#9a9c92" stroke-width="0.5" />
<polyline points="593.8,473.0 611.4,463.7" fill="none" stroke="#9a9c92" stroke-width="0.5" />
<polyline points="593.9,476.9 611.5,467.4" fill="none" stroke="#9a9c92" stroke-width="0.5" />
<polygon points="645.7,441.8 661.4,433.6 661.2,444.3 645.6,452.7" fill="#6db3e3" />
<polygon points="645.7,441.8 650.9,439.1 650.9,445.0 645.6,447.8" fill="#4f88b8" />
<polygon points="656.2,436.3 661.4,433.6 661.4,436.8 656.1,439.5" fill="#4f88b8" />
<polyline points="650.9,439.1 650.8,449.9" fill="none" stroke="#9a9c92" stroke-width="0.5" />
<polyline points="656.2,436.3 656.0,447.1" fill="none" stroke="#9a9c92" stroke-width="0.5" />
<polyline points="645.7,445.5 661.3,437.1" fill="none" stroke="#9a9c92" stroke-width="0.5" />
<polyline points="645.6,449.1 661.3,440.7" fill="none" stroke="#9a9c92" stroke-width="0.5" />
<polygon points="663.4,432.5 678.6,424.5 678.3,435.0 663.2,443.2" fill="#6db3e3" />
<polygon points="663.4,432.5 668.5,429.8 668.3,435.7 663.3,438.4" fill="#4f88b8" />
<polygon points="673.5,427.2 678.6,424.5 678.5,427.6 673.5,430.3" fill="#4f88b8" />
<polyline points="668.5,429.8 668.2,440.5" fill="none" stroke="#9a9c92" stroke-width="0.5" />
<polyline points="673.5,427.2 673.3,437.7" fill="none" stroke="#9a9c92" stroke-width="0.5" />
<polyline points="663.3,436.1 678.5,428.0" fill="none" stroke="#9a9c92" stroke-width="0.5" />
<polyline points="663.2,439.6 678.4,431.5" fill="none" stroke="#9a9c92" stroke-width="0.5" />
<polygon points="690.4,418.3 704.3,411.0 703.8,421.2 690.0,428.7" fill="#6db3e3" />
<polygon points="690.4,418.3 695.0,415.8 694.8,421.5 690.2,424.0" fill="#4f88b8" />
<polygon points="699.7,413.4 704.3,411.0 704.2,414.0 699.5,416.5" fill="#4f88b8" />
<polyline points="695.0,415.8 694.6,426.2" fill="none" stroke="#9a9c92" stroke-width="0.5" />
<polyline points="699.7,413.4 699.2,423.7" fill="none" stroke="#9a9c92" stroke-width="0.5" />
<polyline points="690.3,421.7 704.1,414.4" fill="none" stroke="#9a9c92" stroke-width="0.5" />
<polyline points="690.2,425.2 704.0,417.8" fill="none" stroke="#9a9c92" stroke-width="0.5" />
<polygon points="706.3,409.9 720.0,402.7 719.5,412.7 705.8,420.1" fill="#6db3e3" />
<polygon points="706.3,409.9 710.9,407.5 710.6,413.1 706.0,415.5" fill="#4f88b8" />
<polygon points="715.5,405.1 720.0,402.7 719.9,405.7 715.3,408.1" fill="#4f88b8" />
<polyline points="710.9,407.5 710.3,417.6" fill="none" stroke="#9a9c92" stroke-width="0.5" />
<polyline points="715.5,405.1 714.9,415.2" fill="none" stroke="#9a9c92" stroke-width="0.5" />
<polyline points="706.1,413.3 719.9,406.0" fill="none" stroke="#9a9c92" stroke-width="0.5" />
<polyline points="705.9,416.7 719.7,409.4" fill="none" stroke="#9a9c92" stroke-width="0.5" />
<polygon points="729.0,398.0 741.8,391.2 741.1,401.0 728.4,407.9" fill="#6db3e3" />
<polygon points="729.0,398.0 733.3,395.7 732.9,401.1 728.7,403.4" fill="#4f88b8" />
<polygon points="737.5,393.5 741.8,391.2 741.6,394.1 737.4,396.4" fill="#4f88b8" />
<polyline points="733.3,395.7 732.6,405.6" fill="none" stroke="#9a9c92" stroke-width="0.5" />
<polyline points="737.5,393.5 736.9,403.3" fill="none" stroke="#9a9c92" stroke-width="0.5" />
<polyline points="728.8,401.3 741.6,394.5" fill="none" stroke="#9a9c92" stroke-width="0.5" />
<polyline points="728.6,404.6 741.4,397.7" fill="none" stroke="#9a9c92" stroke-width="0.5" />
<polygon points="743.8,390.2 755.7,383.9 755.0,393.5 743.1,399.9" fill="#6db3e3" />
<polygon points="743.8,390.2 747.8,388.1 747.4,393.4 743.4,395.5" fill="#4f88b8" />
<polygon points="751.7,386.0 755.7,383.9 755.5,386.8 751.5,388.9" fill="#4f88b8" />
<polyline points="747.8,388.1 747.1,397.7" fill="none" stroke="#9a9c92" stroke-width="0.5" />
<polyline points="751.7,386.0 751.0,395.6" fill="none" stroke="#9a9c92" stroke-width="0.5" />
<polyline points="743.6,393.4 755.5,387.1" fill="none" stroke="#9a9c92" stroke-width="0.5" />
<polyline points="743.3,396.7 755.2,390.3" fill="none" stroke="#9a9c92" stroke-width="0.5" />
<polygon points="626.1,452.2 631.0,449.6 631.0,459.1 626.1,461.8" fill="#9cb4c6" />
<polygon points="521.1,538.1 540.3,527.4 540.9,538.3 521.9,549.0" fill="#6db3e3" />
<polygon points="521.1,538.1 527.5,534.6 527.9,540.5 521.5,544.1" fill="#4f88b8" />
<polygon points="533.9,531.0 540.3,527.4 540.5,530.7 534.1,534.3" fill="#4f88b8" />
<polyline points="527.5,534.6 528.2,545.4" fill="none" stroke="#9a9c92" stroke-width="0.5" />
<polyline points="533.9,531.0 534.6,541.9" fill="none" stroke="#9a9c92" stroke-width="0.5" />
<polyline points="521.3,541.8 540.5,531.0" fill="none" stroke="#9a9c92" stroke-width="0.5" />
<polyline points="521.6,545.4 540.7,534.7" fill="none" stroke="#9a9c92" stroke-width="0.5" />
<polygon points="542.2,526.4 561.5,515.7 562.0,526.4 542.8,537.2" fill="#6db3e3" />
<polygon points="542.2,526.4 548.6,522.8 549.0,528.7 542.6,532.3" fill="#4f88b8" />
<polygon points="555.0,519.2 561.5,515.7 561.6,518.9 555.2,522.5" fill="#4f88b8" />
<polyline points="548.6,522.8 549.2,533.6" fill="none" stroke="#9a9c92" stroke-width="0.5" />
<polyline points="555.0,519.2 555.6,530.0" fill="none" stroke="#9a9c92" stroke-width="0.5" />
<polyline points="542.4,530.0 561.6,519.3" fill="none" stroke="#9a9c92" stroke-width="0.5" />
<polyline points="542.6,533.6 561.8,522.8" fill="none" stroke="#9a9c92" stroke-width="0.5" />
<polygon points="575.2,508.1 592.5,498.5 592.7,509.0 575.6,518.7" fill="#6db3e3" />
<polygon points="575.2,508.1 580.9,504.9 581.1,510.7 575.4,513.9" fill="#4f88b8" />
<polygon points="586.7,501.7 592.5,498.5 592.5,501.6 586.8,504.8" fill="#4f88b8" />
<polyline points="580.9,504.9 581.3,515.5" fill="none" stroke="#9a9c92" stroke-width="0.5" />
<polyline points="586.7,501.7 587.0,512.2" fill="none" stroke="#9a9c92" stroke-width="0.5" />
<polyline points="575.3,511.6 592.6,502.0" fill="none" stroke="#9a9c92" stroke-width="0.5" />
<polyline points="575.4,515.2 592.6,505.5" fill="none" stroke="#9a9c92" stroke-width="0.5" />
<polygon points="594.4,497.4 611.7,487.8 611.8,498.2 594.6,507.9" fill="#6db3e3" />
<polygon points="594.4,497.4 600.2,494.2 600.3,500.0 594.5,503.2" fill="#4f88b8" />
<polygon points="605.9,491.0 611.7,487.8 611.7,490.9 606.0,494.1" fill="#4f88b8" />
<polyline points="600.2,494.2 600.4,504.7" fill="none" stroke="#9a9c92" stroke-width="0.5" />
<polyline points="605.9,491.0 606.1,501.5" fill="none" stroke="#9a9c92" stroke-width="0.5" />
<polyline points="594.5,500.9 611.7,491.3" fill="none" stroke="#9a9c92" stroke-width="0.5" />
<polyline points="594.6,504.4 611.8,494.7" fill="none" stroke="#9a9c92" stroke-width="0.5" />
<polygon points="645.4,469.1 660.9,460.5 660.7,470.6 645.3,479.3" fill="#6db3e3" />
<polygon points="645.4,469.1 650.6,466.2 650.5,471.8 645.4,474.7" fill="#4f88b8" />
<polygon points="655.7,463.4 660.9,460.5 660.8,463.5 655.7,466.4" fill="#4f88b8" />
<polyline points="650.6,466.2 650.4,476.4" fill="none" stroke="#9a9c92" stroke-width="0.5" />
<polyline points="655.7,463.4 655.6,473.5" fill="none" stroke="#9a9c92" stroke-width="0.5" />
<polyline points="645.4,472.5 660.8,463.9" fill="none" stroke="#9a9c92" stroke-width="0.5" />
<polyline points="645.4,475.9 660.7,467.2" fill="none" stroke="#9a9c92" stroke-width="0.5" />
<polygon points="662.8,459.4 677.8,451.1 677.5,461.1 662.6,469.5" fill="#6db3e3" />
<polygon points="662.8,459.4 667.8,456.6 667.7,462.2 662.7,465.0" fill="#4f88b8" />
<polygon points="672.8,453.9 677.8,451.1 677.7,454.1 672.7,456.9" fill="#4f88b8" />
<polyline points="667.8,456.6 667.6,466.7" fill="none" stroke="#9a9c92" stroke-width="0.5" />
<polyline points="672.8,453.9 672.5,463.9" fill="none" stroke="#9a9c92" stroke-width="0.5" />
<polyline points="662.7,462.8 677.7,454.4" fill="none" stroke="#9a9c92" stroke-width="0.5" />
<polyline points="662.7,466.2 677.6,457.8" fill="none" stroke="#9a9c92" stroke-width="0.5" />
<polygon points="689.4,444.7 703.1,437.1 702.6,446.9 689.0,454.6" fill="#6db3e3" />
<polygon points="689.4,444.7 694.0,442.1 693.7,447.6 689.2,450.1" fill="#4f88b8" />
<polygon points="698.5,439.6 703.1,437.1 702.9,440.0 698.4,442.6" fill="#4f88b8" />
<polyline points="694.0,442.1 693.6,452.0" fill="none" stroke="#9a9c92" stroke-width="0.5" />
<polyline points="698.5,439.6 698.1,449.5" fill="none" stroke="#9a9c92" stroke-width="0.5" />
<polyline points="689.3,448.0 702.9,440.4" fill="none" stroke="#9a9c92" stroke-width="0.5" />
<polyline points="689.2,451.3 702.8,443.6" fill="none" stroke="#9a9c92" stroke-width="0.5" />
<polygon points="705.0,436.0 718.6,428.5 718.0,438.2 704.5,445.8" fill="#6db3e3" />
<polygon points="705.0,436.0 709.5,433.5 709.3,438.9 704.8,441.4" fill="#4f88b8" />
<polygon points="714.1,431.0 718.6,428.5 718.4,431.4 713.9,433.9" fill="#4f88b8" />
<polyline points="709.5,433.5 709.0,443.3" fill="none" stroke="#9a9c92" stroke-width="0.5" />
<polyline points="714.1,431.0 713.5,440.8" fill="none" stroke="#9a9c92" stroke-width="0.5" />
<polyline points="704.9,439.3 718.4,431.7" fill="none" stroke="#9a9c92" stroke-width="0.5" />
<polyline points="704.7,442.6 718.2,435.0" fill="none" stroke="#9a9c92" stroke-width="0.5" />
<polygon points="727.4,423.5 740.1,416.5 739.4,426.2 726.8,433.2" fill="#6db3e3" />
<polygon points="727.4,423.5 731.6,421.2 731.3,426.5 727.1,428.9" fill="#4f88b8" />
<polygon points="735.8,418.9 740.1,416.5 739.9,419.4 735.7,421.8" fill="#4f88b8" />
<polyline points="731.6,421.2 731.0,430.9" fill="none" stroke="#9a9c92" stroke-width="0.5" />
<polyline points="735.8,418.9 735.2,428.5" fill="none" stroke="#9a9c92" stroke-width="0.5" />
<polyline points="727.2,426.8 739.8,419.7" fill="none" stroke="#9a9c92" stroke-width="0.5" />
<polyline points="727.0,430.0 739.6,422.9" fill="none" stroke="#9a9c92" stroke-width="0.5" />
<polygon points="742.0,415.5 753.8,408.9 753.0,418.4 741.3,425.1" fill="#6db3e3" />
<polygon points="742.0,415.5 745.9,413.3 745.5,418.5 741.6,420.7" fill="#4f88b8" />
<polygon points="749.9,411.1 753.8,408.9 753.6,411.8 749.6,414.0" fill="#4f88b8" />
<polyline points="745.9,413.3 745.2,422.9" fill="none" stroke="#9a9c92" stroke-width="0.5" />
<polyline points="749.9,411.1 749.1,420.6" fill="none" stroke="#9a9c92" stroke-width="0.5" />
<polyline points="741.8,418.7 753.5,412.1" fill="none" stroke="#9a9c92" stroke-width="0.5" />
<polyline points="741.6,421.9 753.3,415.3" fill="none" stroke="#9a9c92" stroke-width="0.5" />
<polygon points="626.1,479.8 631.0,477.1 631.0,485.9 626.2,488.6" fill="#9cb4c6" />
<defs><linearGradient id="gt" x1="767" x2="823" y1="0" y2="0" gradientUnits="userSpaceOnUse"><stop offset="0" stop-color="#9a8660"/><stop offset=".28" stop-color="#a08c64"/><stop offset=".5" stop-color="#bca97e"/><stop offset=".72" stop-color="#ad996e"/><stop offset="1" stop-color="#a8936a"/></linearGradient><linearGradient id="gm" x1="767" x2="823" y1="0" y2="0" gradientUnits="userSpaceOnUse"><stop offset="0" stop-color="#603638"/><stop offset=".3" stop-color="#633839"/><stop offset=".5" stop-color="#754547"/><stop offset="1" stop-color="#6a3c3e"/></linearGradient></defs>
<path d="M767.6,342.5 L784.9,348.8 Q795.5,352.9 805.9,348.5 L822.8,341.3 L821.7,352.0 L805.0,358.4 Q794.8,362.3 784.3,358.4 L767.0,352.6 Z" fill="url(#gm)" />
<path d="M767.0,352.6 L784.3,358.4 Q794.8,362.3 805.0,358.4 L821.7,352.0 L820.4,364.5 L803.9,371.7 Q793.9,376.1 783.3,372.2 L766.2,366.4 Z" fill="url(#gt)" />
<path d="M766.2,366.4 L783.3,372.2 Q793.9,376.1 803.9,371.7 L820.4,364.5 L819.2,375.8 L803.0,382.6 Q793.1,386.8 782.6,382.9 L765.5,377.0 Z" fill="url(#gm)" />
<path d="M765.5,377.0 L782.6,382.9 Q793.1,386.8 803.0,382.6 L819.2,375.8 L817.8,389.0 L801.9,396.2 Q792.2,400.6 781.7,396.7 L764.7,390.9 Z" fill="url(#gt)" />
<path d="M764.7,390.9 L781.7,396.7 Q792.2,400.6 801.9,396.2 L817.8,389.0 L816.7,399.6 L801.0,406.9 Q791.4,411.3 781.0,407.4 L764.0,401.5 Z" fill="url(#gm)" />
<path d="M764.0,401.5 L781.0,407.4 Q791.4,411.3 801.0,406.9 L816.7,399.6 L815.3,412.8 L799.9,420.8 Q790.4,425.7 780.1,421.6 L763.2,415.3 Z" fill="url(#gt)" />
<polygon points="768.2,352.9 781.4,357.4 780.2,369.9 767.6,365.4" fill="#74b6e2" />
<polygon points="768.2,352.9 772.6,354.4 772.2,361.3 767.9,359.8" fill="#4f88b8" />
<polygon points="777.0,355.9 781.4,357.4 781.0,361.1 776.7,359.6" fill="#4f88b8" />
<polyline points="772.6,354.4 771.8,366.9" fill="none" stroke="#9a9c92" stroke-width="0.5" />
<polyline points="777.0,355.9 776.0,368.4" fill="none" stroke="#9a9c92" stroke-width="0.5" />
<polyline points="768.0,357.1 781.0,361.6" fill="none" stroke="#9a9c92" stroke-width="0.5" />
<polyline points="767.8,361.2 780.6,365.7" fill="none" stroke="#9a9c92" stroke-width="0.5" />
<polygon points="765.7,377.7 778.3,382.7 777.6,394.6 765.1,390.2" fill="#74b6e2" />
<polygon points="765.7,377.7 769.9,379.4 769.6,386.1 765.4,384.6" fill="#4f88b8" />
<polygon points="774.1,381.0 778.3,382.7 778.1,386.3 773.9,384.7" fill="#4f88b8" />
<polyline points="769.9,379.4 769.3,391.7" fill="none" stroke="#9a9c92" stroke-width="0.5" />
<polyline points="774.1,381.0 773.4,393.1" fill="none" stroke="#9a9c92" stroke-width="0.5" />
<polyline points="765.5,381.9 778.1,386.7" fill="none" stroke="#9a9c92" stroke-width="0.5" />
<polyline points="765.3,386.0 777.8,390.6" fill="none" stroke="#9a9c92" stroke-width="0.5" />
<polygon points="763.8,402.1 776.4,406.5 775.1,419.1 763.2,415.3" fill="#74b6e2" />
<polygon points="763.8,402.1 768.0,403.6 767.5,410.7 763.5,409.4" fill="#4f88b8" />
<polygon points="772.2,405.0 776.4,406.5 776.0,410.3 771.9,408.9" fill="#4f88b8" />
<polyline points="768.0,403.6 767.2,416.6" fill="none" stroke="#9a9c92" stroke-width="0.5" />
<polyline points="772.2,405.0 771.1,417.8" fill="none" stroke="#9a9c92" stroke-width="0.5" />
<polyline points="763.6,406.5 776.0,410.7" fill="none" stroke="#9a9c92" stroke-width="0.5" />
<polyline points="763.4,410.9 775.5,414.9" fill="none" stroke="#9a9c92" stroke-width="0.5" />
<polygon points="808.4,357.0 816.5,353.2 814.7,366.4 806.5,370.2" fill="#a4c8e2" />
<polygon points="808.4,357.0 812.5,355.1 811.4,362.4 807.4,364.3" fill="#8fb2d0" />
<polyline points="812.5,355.1 810.6,368.3" fill="none" stroke="#9a9c92" stroke-width="0.5" />
<polyline points="807.8,361.4 815.9,357.6" fill="none" stroke="#9a9c92" stroke-width="0.5" />
<polyline points="807.1,365.8 815.3,362.0" fill="none" stroke="#9a9c92" stroke-width="0.5" />
<polygon points="805.2,381.4 813.4,378.3 811.5,391.5 803.4,395.2" fill="#a4c8e2" />
<polygon points="805.2,381.4 809.3,379.9 808.3,387.3 804.2,389.0" fill="#8fb2d0" />
<polyline points="809.3,379.9 807.5,393.4" fill="none" stroke="#9a9c92" stroke-width="0.5" />
<polyline points="804.6,386.0 812.8,382.7" fill="none" stroke="#9a9c92" stroke-width="0.5" />
<polyline points="804.0,390.6 812.1,387.1" fill="none" stroke="#9a9c92" stroke-width="0.5" />
<polygon points="802.1,406.5 810.3,402.8 808.4,415.3 800.2,419.1" fill="#a4c8e2" />
<polygon points="802.1,406.5 806.2,404.6 805.2,411.6 801.1,413.4" fill="#8fb2d0" />
<polyline points="806.2,404.6 804.3,417.2" fill="none" stroke="#9a9c92" stroke-width="0.5" />
<polyline points="801.5,410.7 809.7,407.0" fill="none" stroke="#9a9c92" stroke-width="0.5" />
<polyline points="800.8,414.9 809.0,411.1" fill="none" stroke="#9a9c92" stroke-width="0.5" />
<polygon points="758.1,280.1 835.4,304.7 829.0,342.0 817.3,343.3 754.0,318.2" fill="#7c6b4c" />
<polygon points="754.0,284.0 757.5,285.0 754.8,318.5 752.5,317.5" fill="#47282a" />
<polygon points="764.1,298.1 774.4,301.3 774.1,324.2 763.6,320.5" fill="#55302f" />
<polygon points="766.1,299.6 772.6,301.6 772.3,319.2 765.8,317.0" fill="#a9c0d2" />
<polygon points="780.6,303.7 808.8,311.7 805.7,336.8 779.1,326.2" fill="#47282a" />
<polygon points="815.3,315.2 826.3,318.6 824.5,340.5 814.0,337.3" fill="#55302f" />
<polygon points="817.8,317.2 824.3,319.2 823.3,336.3 816.8,334.3" fill="#a9c0d2" />
<polygon points="758.1,278.3 765.6,280.6 762.2,323.6 754.9,321.3" fill="#8e7c56" />
<polygon points="775.1,286.8 781.6,288.8 778.0,329.8 771.6,327.8" fill="#8e7c56" />
<polygon points="810.8,298.5 817.3,300.4 812.8,341.4 806.4,339.5" fill="#8e7c56" />
<polygon points="835.0,304.5 890.0,279.4 886.5,340.0 875.4,374.0 866.0,379.0 845.0,390.0 838.0,412.5 818.0,415.0 822.0,342.0 828.3,302.5" fill="#9f8d66" />
<polygon points="835.0,304.5 890.0,279.4 889.2,288.0 834.2,313.5" fill="#93815b" />
<polygon points="828.3,300.9 834.9,303.2 822.0,414.3 815.2,414.5" fill="#b3a076" />
<polygon points="834.9,305.7 839.2,304.0 825.4,414.0 822.6,415.0" fill="#5a3234" />
<polygon points="838.2,303.5 845.3,300.5 831.6,413.4 825.4,414.0" fill="#b3a076" />
<polyline points="845.3,300.8 831.6,413.4" fill="none" stroke="#7d6c4a" stroke-width="1.1" />
<polygon points="845.3,313.0 851.4,310.4 850.9,314.4 844.8,317.0" fill="#683a3d" />
<polygon points="844.8,317.0 850.9,314.4 846.7,346.4 840.7,349.0" fill="#a9c0d2" />
<polygon points="840.7,349.0 846.7,346.4 845.5,355.4 839.6,358.0" fill="#683a3d" />
<polygon points="839.6,358.0 845.5,355.4 843.0,374.4 837.1,377.0" fill="#a9c0d2" />
<polygon points="837.1,377.0 843.0,374.4 842.0,382.4 836.1,385.0" fill="#683a3d" />
<polygon points="836.1,385.0 842.0,382.4 839.9,398.4 834.1,401.0" fill="#a9c0d2" />
<polygon points="834.1,401.0 839.9,398.4 838.8,406.4 833.0,409.0" fill="#683a3d" />
<polygon points="856.6,309.5 861.2,307.5 854.4,357.5 849.9,359.5" fill="#a9c0d2" />
<polygon points="861.2,307.5 864.6,306.0 857.7,356.0 854.4,357.5" fill="#55302f" />
<polygon points="864.6,306.0 870.0,303.6 862.9,353.6 857.7,356.0" fill="#a9c0d2" />
<polygon points="870.0,303.6 874.9,301.4 867.7,351.4 862.9,353.6" fill="#55302f" />
<polyline points="853.5,335.5 870.5,327.5" fill="none" stroke="#8a6a52" stroke-width="1.4" />
<polygon points="879.6,300.0 882.4,298.8 877.7,330.8 874.9,332.0" fill="#a9c0d2" />
<polygon points="874.9,332.0 877.7,330.8 876.3,339.8 873.6,341.0" fill="#683a3d" />
<polygon points="873.6,341.0 876.3,339.8 873.5,358.8 870.8,360.0" fill="#a9c0d2" />
<polygon points="870.8,360.0 873.5,358.8 872.3,366.8 869.6,368.0" fill="#683a3d" />
<polygon points="869.6,368.0 872.3,366.8 871.4,372.8 868.7,374.0" fill="#a9c0d2" />
<polygon points="845.2,367.1 866.6,356.9 866.0,372.7 861.0,372.7 845.2,381.8" fill="#a8936a" />
<polygon points="845.2,381.8 861.0,372.7 860.4,385.2 858.7,386.9 848.6,392.5 845.2,392.0" fill="#583530" />
<polygon points="847.0,383.5 851.0,381.2 850.8,390.5 847.0,392.0" fill="#6d5040" />
<polygon points="853.5,379.8 858.5,377.0 858.2,386.2 853.3,389.0" fill="#6d5040" />
<polygon points="851.4,298.2 856.6,296.0 843.5,394.0 837.3,394.2" fill="#b3a076" />
<polyline points="856.6,296.3 843.5,394.0" fill="none" stroke="#7d6c4a" stroke-width="1.1" />
<polygon points="873.8,287.4 878.8,285.4 866.6,380.6 861.0,381.0" fill="#b3a076" />
<polyline points="878.8,285.7 866.6,380.6" fill="none" stroke="#7d6c4a" stroke-width="1.1" />
<polygon points="882.4,278.5 890.0,275.5 875.7,377.3 870.0,377.5" fill="#b3a076" />
<ellipse cx="889.5" cy="302.5" rx="2.2" ry="1.8" fill="#e0cfa0"/>
<polygon points="889.0,303.0 892.8,301.5 886.4,359.8 883.3,361.0 883.0,372.0 875.4,374.0 878.0,345.0" fill="#9f8d66" />
<polygon points="886.7,307.2 892.5,303.5 891.6,311.4 885.3,314.2" fill="#683a3d" />
<polygon points="882.9,330.2 890.4,325.8 889.6,332.1 882.4,335.9" fill="#683a3d" />
<polygon points="879.0,352.4 887.0,346.8 885.8,358.6 878.0,361.5" fill="#683a3d" />
<polygon points="884.0,316.5 886.5,315.3 885.0,327.0 882.8,328.0" fill="#a9c0d2" />
<polygon points="880.0,339.0 882.8,337.8 881.5,350.0 879.0,351.5" fill="#a9c0d2" />
<polygon points="876.8,362.0 880.2,361.0 879.2,372.5 876.0,373.5" fill="#a9c0d2" />
<polygon points="861.5,381.2 872.3,382.3 879.0,388.6 889.2,395.3 902.8,401.0 902.2,406.6 898.2,408.9 893.7,407.8 879.0,398.7 870.0,390.8 861.5,386.9" fill="#a8936a" />
<polygon points="895.0,403.5 902.8,401.0 902.2,406.6 898.2,408.9 894.0,408.0" fill="#8f7d58" />
<polygon points="847.4,393.1 861.5,386.9 870.0,390.8 879.0,398.7 893.7,408.9 881.3,415.1 872.3,412.3 863.2,406.6 854.2,398.7" fill="#808080" />
<polygon points="837.3,394.2 847.4,393.1 854.2,398.7 863.2,406.6 872.3,412.3 881.3,414.5 880.7,419.1 876.8,423.6 849.7,413.4 842.9,415.7 836.1,412.3" fill="#6f6247" />
<polygon points="837.3,394.2 847.4,393.1 854.2,398.7 863.2,406.6 872.3,412.3 881.3,414.5 877.5,416.3 867.5,413.5 860.0,407.5 852.0,400.5 845.0,396.5" fill="#b09c72" />
<polygon points="877.5,416.3 881.3,414.5 880.7,419.1 876.8,423.6 874.0,422.5" fill="#9a8660" />
<polygon points="835.0,413.4 845.0,415.4 842.0,417.0 836.0,416.0" fill="#8a8a8a" />
<polygon points="889.3,280.6 1002.6,227.0 1003.6,228.0 991.2,284.6 990.2,284.3 879.6,346.7" fill="#683a3d" />
<polygon points="889.3,280.6 1002.6,227.0 1001.0,234.9 888.2,288.1" fill="#683a3d" />
<polygon points="888.2,288.1 1001.0,234.9 998.8,246.3 886.2,301.4" fill="#9f8d66" />
<polygon points="886.2,301.4 998.8,246.3 997.3,253.4 884.9,310.0" fill="#683a3d" />
<polygon points="884.9,310.0 997.3,253.4 994.9,265.0 883.0,323.4" fill="#9f8d66" />
<polygon points="883.0,323.4 994.9,265.0 993.2,273.0 881.9,331.0" fill="#683a3d" />
<polygon points="881.9,331.0 993.2,273.0 990.2,284.3 879.6,346.7" fill="#9f8d66" />
<polygon points="898.8,284.1 906.7,280.4 905.0,291.0 897.1,294.9" fill="#6db3e3" />
<polygon points="898.8,284.1 902.8,282.2 901.8,288.1 897.9,290.0" fill="#4f88b8" />
<polyline points="902.8,282.2 901.1,292.9" fill="none" stroke="#9a9c92" stroke-width="0.5" />
<polyline points="898.3,287.7 906.2,283.9" fill="none" stroke="#9a9c92" stroke-width="0.5" />
<polyline points="897.7,291.3 905.6,287.5" fill="none" stroke="#9a9c92" stroke-width="0.5" />
<polygon points="908.4,279.6 917.2,275.4 915.5,285.9 906.7,290.2" fill="#6db3e3" />
<polygon points="908.4,279.6 912.8,277.5 911.9,283.3 907.5,285.4" fill="#4f88b8" />
<polyline points="912.8,277.5 911.1,288.0" fill="none" stroke="#9a9c92" stroke-width="0.5" />
<polyline points="907.9,283.1 916.6,278.9" fill="none" stroke="#9a9c92" stroke-width="0.5" />
<polyline points="907.3,286.6 916.1,282.4" fill="none" stroke="#9a9c92" stroke-width="0.5" />
<polygon points="925.1,271.7 932.2,268.4 930.4,278.6 923.4,282.0" fill="#6db3e3" />
<polygon points="925.1,271.7 928.7,270.0 927.7,275.7 924.1,277.4" fill="#4f88b8" />
<polyline points="928.7,270.0 926.9,280.3" fill="none" stroke="#9a9c92" stroke-width="0.5" />
<polyline points="924.5,275.1 931.6,271.8" fill="none" stroke="#9a9c92" stroke-width="0.5" />
<polyline points="923.9,278.6 931.0,275.2" fill="none" stroke="#9a9c92" stroke-width="0.5" />
<polygon points="933.9,267.6 941.8,263.8 940.0,273.9 932.1,277.7" fill="#6db3e3" />
<polygon points="933.9,267.6 937.9,265.7 936.9,271.3 932.9,273.2" fill="#4f88b8" />
<polyline points="937.9,265.7 936.1,275.8" fill="none" stroke="#9a9c92" stroke-width="0.5" />
<polyline points="933.3,270.9 941.2,267.2" fill="none" stroke="#9a9c92" stroke-width="0.5" />
<polyline points="932.7,274.3 940.6,270.5" fill="none" stroke="#9a9c92" stroke-width="0.5" />
<polygon points="959.4,255.5 966.4,252.2 964.5,261.9 957.5,265.3" fill="#6db3e3" />
<polygon points="959.4,255.5 962.9,253.9 961.9,259.2 958.4,260.9" fill="#4f88b8" />
<polyline points="962.9,253.9 961.0,263.6" fill="none" stroke="#9a9c92" stroke-width="0.5" />
<polyline points="958.8,258.8 965.8,255.4" fill="none" stroke="#9a9c92" stroke-width="0.5" />
<polyline points="958.2,262.0 965.2,258.7" fill="none" stroke="#9a9c92" stroke-width="0.5" />
<polygon points="968.2,251.4 975.2,248.1 973.3,257.6 966.3,261.0" fill="#6db3e3" />
<polygon points="968.2,251.4 971.7,249.7 970.7,255.0 967.2,256.7" fill="#4f88b8" />
<polyline points="971.7,249.7 969.8,259.3" fill="none" stroke="#9a9c92" stroke-width="0.5" />
<polyline points="967.6,254.6 974.6,251.2" fill="none" stroke="#9a9c92" stroke-width="0.5" />
<polyline points="966.9,257.8 973.9,254.4" fill="none" stroke="#9a9c92" stroke-width="0.5" />
<polygon points="981.3,245.2 988.4,241.9 986.5,251.1 979.4,254.6" fill="#6db3e3" />
<polygon points="981.3,245.2 984.8,243.5 983.8,248.7 980.2,250.4" fill="#4f88b8" />
<polyline points="984.8,243.5 982.9,252.9" fill="none" stroke="#9a9c92" stroke-width="0.5" />
<polyline points="980.7,248.3 987.7,244.9" fill="none" stroke="#9a9c92" stroke-width="0.5" />
<polyline points="980.0,251.5 987.1,248.0" fill="none" stroke="#9a9c92" stroke-width="0.5" />
<polygon points="990.1,241.1 996.3,238.1 994.4,247.3 988.2,250.3" fill="#6db3e3" />
<polygon points="990.1,241.1 993.2,239.6 992.1,244.6 989.0,246.1" fill="#4f88b8" />
<polyline points="993.2,239.6 991.3,248.8" fill="none" stroke="#9a9c92" stroke-width="0.5" />
<polyline points="989.4,244.1 995.6,241.2" fill="none" stroke="#9a9c92" stroke-width="0.5" />
<polyline points="988.8,247.2 995.0,244.2" fill="none" stroke="#9a9c92" stroke-width="0.5" />
<polygon points="949.8,260.1 951.6,259.2 950.1,267.5 948.3,268.3" fill="#9cb4c6" />
<polygon points="895.4,305.7 903.3,301.8 901.6,312.5 893.7,316.6" fill="#6db3e3" />
<polygon points="895.4,305.7 899.4,303.7 898.4,309.7 894.5,311.7" fill="#4f88b8" />
<polyline points="899.4,303.7 897.6,314.5" fill="none" stroke="#9a9c92" stroke-width="0.5" />
<polyline points="894.9,309.3 902.7,305.3" fill="none" stroke="#9a9c92" stroke-width="0.5" />
<polyline points="894.3,313.0 902.1,308.9" fill="none" stroke="#9a9c92" stroke-width="0.5" />
<polygon points="905.0,300.9 913.7,296.5 911.9,307.1 903.2,311.6" fill="#6db3e3" />
<polygon points="905.0,300.9 909.3,298.7 908.4,304.6 904.0,306.8" fill="#4f88b8" />
<polyline points="909.3,298.7 907.6,309.4" fill="none" stroke="#9a9c92" stroke-width="0.5" />
<polyline points="904.4,304.5 913.1,300.0" fill="none" stroke="#9a9c92" stroke-width="0.5" />
<polyline points="903.8,308.1 912.5,303.6" fill="none" stroke="#9a9c92" stroke-width="0.5" />
<polygon points="921.6,292.6 928.6,289.0 926.8,299.3 919.8,303.0" fill="#6db3e3" />
<polygon points="921.6,292.6 925.1,290.8 924.1,296.5 920.6,298.3" fill="#4f88b8" />
<polyline points="925.1,290.8 923.3,301.2" fill="none" stroke="#9a9c92" stroke-width="0.5" />
<polyline points="921.0,296.0 928.0,292.4" fill="none" stroke="#9a9c92" stroke-width="0.5" />
<polyline points="920.4,299.5 927.4,295.9" fill="none" stroke="#9a9c92" stroke-width="0.5" />
<polygon points="930.3,288.2 938.1,284.2 936.3,294.4 928.5,298.5" fill="#6db3e3" />
<polygon points="930.3,288.2 934.2,286.2 933.2,291.8 929.3,293.8" fill="#4f88b8" />
<polyline points="934.2,286.2 932.4,296.4" fill="none" stroke="#9a9c92" stroke-width="0.5" />
<polyline points="929.7,291.6 937.5,287.6" fill="none" stroke="#9a9c92" stroke-width="0.5" />
<polyline points="929.1,295.0 936.9,291.0" fill="none" stroke="#9a9c92" stroke-width="0.5" />
<polygon points="955.6,275.4 962.6,271.9 960.7,281.6 953.8,285.3" fill="#6db3e3" />
<polygon points="955.6,275.4 959.1,273.6 958.1,279.0 954.6,280.8" fill="#4f88b8" />
<polyline points="959.1,273.6 957.3,283.4" fill="none" stroke="#9a9c92" stroke-width="0.5" />
<polyline points="955.0,278.7 962.0,275.1" fill="none" stroke="#9a9c92" stroke-width="0.5" />
<polyline points="954.4,282.0 961.4,278.4" fill="none" stroke="#9a9c92" stroke-width="0.5" />
<polygon points="964.4,271.0 971.4,267.5 969.5,277.1 962.5,280.7" fill="#6db3e3" />
<polygon points="964.4,271.0 967.9,269.2 966.8,274.5 963.4,276.3" fill="#4f88b8" />
<polyline points="967.9,269.2 966.0,278.9" fill="none" stroke="#9a9c92" stroke-width="0.5" />
<polyline points="963.8,274.2 970.7,270.7" fill="none" stroke="#9a9c92" stroke-width="0.5" />
<polyline points="963.1,277.5 970.1,273.9" fill="none" stroke="#9a9c92" stroke-width="0.5" />
<polygon points="977.4,264.4 984.5,260.8 982.6,270.2 975.5,273.9" fill="#6db3e3" />
<polygon points="977.4,264.4 981.0,262.6 979.9,267.8 976.4,269.6" fill="#4f88b8" />
<polyline points="981.0,262.6 979.1,272.1" fill="none" stroke="#9a9c92" stroke-width="0.5" />
<polyline points="976.8,267.6 983.9,264.0" fill="none" stroke="#9a9c92" stroke-width="0.5" />
<polyline points="976.2,270.7 983.2,267.1" fill="none" stroke="#9a9c92" stroke-width="0.5" />
<polygon points="986.2,260.0 992.4,256.9 990.5,266.1 984.3,269.3" fill="#6db3e3" />
<polygon points="986.2,260.0 989.3,258.4 988.2,263.5 985.1,265.1" fill="#4f88b8" />
<polyline points="989.3,258.4 987.4,267.7" fill="none" stroke="#9a9c92" stroke-width="0.5" />
<polyline points="985.6,263.1 991.7,260.0" fill="none" stroke="#9a9c92" stroke-width="0.5" />
<polyline points="984.9,266.2 991.1,263.0" fill="none" stroke="#9a9c92" stroke-width="0.5" />
<polygon points="946.1,280.2 947.9,279.3 946.3,287.6 944.6,288.6" fill="#9cb4c6" />
<polygon points="892.2,326.6 899.9,322.6 897.9,335.1 890.1,339.5" fill="#6db3e3" />
<polygon points="892.2,326.6 896.1,324.6 894.9,331.6 891.1,333.7" fill="#4f88b8" />
<polyline points="896.1,324.6 894.0,337.3" fill="none" stroke="#9a9c92" stroke-width="0.5" />
<polyline points="891.5,330.9 899.3,326.8" fill="none" stroke="#9a9c92" stroke-width="0.5" />
<polyline points="890.8,335.2 898.6,330.9" fill="none" stroke="#9a9c92" stroke-width="0.5" />
<polygon points="901.6,321.7 910.3,317.2 908.2,329.3 899.6,334.2" fill="#6db3e3" />
<polygon points="901.6,321.7 905.9,319.4 904.8,326.2 900.5,328.6" fill="#4f88b8" />
<polyline points="905.9,319.4 903.9,331.8" fill="none" stroke="#9a9c92" stroke-width="0.5" />
<polyline points="900.9,325.9 909.6,321.2" fill="none" stroke="#9a9c92" stroke-width="0.5" />
<polyline points="900.3,330.0 908.9,325.3" fill="none" stroke="#9a9c92" stroke-width="0.5" />
<polygon points="918.0,313.1 925.0,309.5 923.0,321.0 916.0,324.9" fill="#6db3e3" />
<polygon points="918.0,313.1 921.5,311.3 920.4,317.7 916.9,319.6" fill="#4f88b8" />
<polyline points="921.5,311.3 919.5,323.0" fill="none" stroke="#9a9c92" stroke-width="0.5" />
<polyline points="917.4,317.1 924.4,313.3" fill="none" stroke="#9a9c92" stroke-width="0.5" />
<polyline points="916.7,321.0 923.7,317.2" fill="none" stroke="#9a9c92" stroke-width="0.5" />
<polygon points="926.7,308.6 934.5,304.6 932.5,315.6 924.7,320.0" fill="#6db3e3" />
<polygon points="926.7,308.6 930.6,306.6 929.5,312.8 925.6,314.9" fill="#4f88b8" />
<polyline points="930.6,306.6 928.6,317.8" fill="none" stroke="#9a9c92" stroke-width="0.5" />
<polyline points="926.0,312.4 933.8,308.3" fill="none" stroke="#9a9c92" stroke-width="0.5" />
<polyline points="925.4,316.2 933.2,311.9" fill="none" stroke="#9a9c92" stroke-width="0.5" />
<polygon points="951.8,295.5 958.7,291.9 956.8,301.9 949.9,305.8" fill="#6db3e3" />
<polygon points="951.8,295.5 955.3,293.7 954.2,299.3 950.8,301.2" fill="#4f88b8" />
<polyline points="955.3,293.7 953.4,303.9" fill="none" stroke="#9a9c92" stroke-width="0.5" />
<polyline points="951.2,299.0 958.1,295.3" fill="none" stroke="#9a9c92" stroke-width="0.5" />
<polyline points="950.5,302.4 957.5,298.6" fill="none" stroke="#9a9c92" stroke-width="0.5" />
<polygon points="960.5,291.0 967.4,287.4 965.5,297.0 958.6,300.9" fill="#6db3e3" />
<polygon points="960.5,291.0 964.0,289.2 962.9,294.6 959.5,296.5" fill="#4f88b8" />
<polyline points="964.0,289.2 962.1,299.0" fill="none" stroke="#9a9c92" stroke-width="0.5" />
<polyline points="959.9,294.3 966.8,290.6" fill="none" stroke="#9a9c92" stroke-width="0.5" />
<polyline points="959.2,297.6 966.2,293.8" fill="none" stroke="#9a9c92" stroke-width="0.5" />
<polygon points="973.5,284.3 980.5,280.6 978.6,289.6 971.6,293.6" fill="#6db3e3" />
<polygon points="973.5,284.3 977.0,282.5 975.9,287.5 972.4,289.4" fill="#4f88b8" />
<polyline points="977.0,282.5 975.1,291.6" fill="none" stroke="#9a9c92" stroke-width="0.5" />
<polyline points="972.8,287.4 979.9,283.6" fill="none" stroke="#9a9c92" stroke-width="0.5" />
<polyline points="972.2,290.5 979.2,286.6" fill="none" stroke="#9a9c92" stroke-width="0.5" />
<polygon points="982.2,279.8 988.3,276.6 986.5,285.2 980.3,288.7" fill="#6db3e3" />
<polygon points="982.2,279.8 985.2,278.2 984.2,283.0 981.1,284.7" fill="#4f88b8" />
<polyline points="985.2,278.2 983.4,286.9" fill="none" stroke="#9a9c92" stroke-width="0.5" />
<polyline points="981.5,282.7 987.7,279.4" fill="none" stroke="#9a9c92" stroke-width="0.5" />
<polyline points="980.9,285.7 987.1,282.3" fill="none" stroke="#9a9c92" stroke-width="0.5" />
<polygon points="942.4,300.5 944.1,299.5 942.5,308.5 940.7,309.5" fill="#9cb4c6" />
<polygon points="1002.6,227.0 1003.6,228.0 991.2,284.6 990.2,284.3" fill="#8f7d58" />
<polygon points="882.4,278.5 890.0,275.5 875.7,377.3 870.0,377.5" fill="#b3a076" />
<polygon points="889.0,303.0 892.8,301.5 886.4,359.8 883.3,361.0 883.0,372.0 875.4,374.0 878.0,345.0" fill="#9f8d66" />
<polygon points="886.7,307.2 892.5,303.5 891.6,311.4 885.3,314.2" fill="#683a3d" />
<polygon points="882.9,330.2 890.4,325.8 889.6,332.1 882.4,335.9" fill="#683a3d" />
<polygon points="879.0,352.4 887.0,346.8 885.8,358.6 878.0,361.5" fill="#683a3d" />
<polygon points="884.0,316.5 886.5,315.3 885.0,327.0 882.8,328.0" fill="#a9c0d2" />
<polygon points="880.0,339.0 882.8,337.8 881.5,350.0 879.0,351.5" fill="#a9c0d2" />
<polygon points="876.8,362.0 880.2,361.0 879.2,372.5 876.0,373.5" fill="#a9c0d2" />
<polygon points="889.0,291.0 891.0,290.2 890.3,300.0 888.5,300.8" fill="#a9c0d2" />
<ellipse cx="889.8" cy="302.3" rx="2.2" ry="1.8" fill="#e0cfa0"/>
<defs><linearGradient id="gm2" x1="431" x2="500" y1="0" y2="0" gradientUnits="userSpaceOnUse"><stop offset="0" stop-color="#55302f"/><stop offset=".5" stop-color="#6e4042"/><stop offset="1" stop-color="#653a3c"/></linearGradient></defs>
<path d="M495.4,491.5 C492.9,492.4 486.2,495.9 480.4,497.2 C474.5,498.4 466.2,498.9 460.3,499.0 C454.4,499.1 449.7,498.2 445.0,497.5 C440.3,496.8 436.4,496.2 432.2,494.8 C428.0,493.4 423.7,491.3 420.0,489.0 C416.3,486.7 412.7,483.4 410.1,481.0 C407.5,478.6 405.8,476.7 404.6,474.5 C403.4,472.3 403.0,470.1 402.8,468.0 C402.6,465.9 402.8,464.1 403.2,462.0 C403.6,459.9 404.4,457.5 405.5,455.5 C406.6,453.5 408.2,451.5 410.0,450.0 C411.8,448.5 413.9,447.2 416.5,446.5 C419.1,445.8 423.9,445.9 425.4,445.8 Z" fill="#a08c62" />
<path d="M493.5,491.6 C491.2,492.3 485.0,494.8 479.5,495.8 C474.0,496.8 466.0,497.5 460.3,497.5 C454.6,497.5 449.9,496.7 445.3,496.0 C440.8,495.3 437.0,494.6 433.0,493.2 C429.0,491.8 424.9,489.6 421.5,487.4 C418.1,485.2 414.7,482.1 412.5,479.8 C410.3,477.5 409.1,475.5 408.2,473.5 C407.3,471.5 407.2,469.7 407.2,468.0 C407.1,466.3 407.3,464.8 407.9,463.2 C408.4,461.6 409.3,460.0 410.5,458.6 C411.7,457.2 413.4,456.0 415.0,455.0 C416.6,454.0 418.2,453.3 420.0,452.8 C421.8,452.3 424.8,452.3 425.7,452.2 Z" fill="#737373" />
<polygon points="425.4,446.2 495.6,491.4 493.5,491.8 425.7,452.4" fill="#47282a" />
<path d="M427,491 C447,500.6 472,501.6 495.4,491.8 L499.8,549.4 C486,556 462,559.5 438,550.5 Z" fill="url(#gm2)"/>
<polygon points="403.2,465.1 407.6,477.4 412.0,482.0 411.0,512.0 404.5,510.0 401.5,480.0" fill="#55302f" />
<polygon points="436.5,507.5 442.5,509.5 442.5,523.8 436.5,521.2" fill="#93b6d4" />
<polygon points="436.5,507.5 439.5,508.5 439.5,516.2 436.5,515.1" fill="#7a9fc4" />
<polyline points="439.5,508.5 439.5,522.5" fill="none" stroke="#b9c6cc" stroke-width="0.4" />
<polyline points="436.5,512.1 442.5,514.3" fill="none" stroke="#b9c6cc" stroke-width="0.4" />
<polyline points="436.5,516.7 442.5,519.0" fill="none" stroke="#b9c6cc" stroke-width="0.4" />
<polygon points="444.5,510.1 451.0,511.6 451.0,526.5 444.5,524.5" fill="#93b6d4" />
<polygon points="444.5,510.1 447.8,510.9 447.8,518.9 444.5,518.0" fill="#7a9fc4" />
<polyline points="447.8,510.9 447.8,525.5" fill="none" stroke="#b9c6cc" stroke-width="0.4" />
<polyline points="444.5,514.9 451.0,516.6" fill="none" stroke="#b9c6cc" stroke-width="0.4" />
<polyline points="444.5,519.7 451.0,521.5" fill="none" stroke="#b9c6cc" stroke-width="0.4" />
<polygon points="453.5,512.1 461.5,512.9 461.5,528.2 453.5,527.0" fill="#93b6d4" />
<polygon points="453.5,512.1 457.5,512.5 457.5,520.8 453.5,520.3" fill="#7a9fc4" />
<polyline points="457.5,512.5 457.5,527.6" fill="none" stroke="#b9c6cc" stroke-width="0.4" />
<polyline points="453.5,517.0 461.5,518.0" fill="none" stroke="#b9c6cc" stroke-width="0.4" />
<polyline points="453.5,522.0 461.5,523.1" fill="none" stroke="#b9c6cc" stroke-width="0.4" />
<polygon points="464.0,513.0 472.5,512.7 472.5,528.2 464.0,528.4" fill="#93b6d4" />
<polygon points="464.0,513.0 468.2,512.8 468.2,521.3 464.0,521.4" fill="#7a9fc4" />
<polyline points="468.2,512.8 468.2,528.3" fill="none" stroke="#b9c6cc" stroke-width="0.4" />
<polyline points="464.0,518.1 472.5,517.8" fill="none" stroke="#b9c6cc" stroke-width="0.4" />
<polyline points="464.0,523.2 472.5,523.0" fill="none" stroke="#b9c6cc" stroke-width="0.4" />
<polygon points="475.0,512.4 483.5,510.9 483.5,526.2 475.0,527.9" fill="#93b6d4" />
<polygon points="475.0,512.4 479.2,511.6 479.2,520.1 475.0,520.9" fill="#7a9fc4" />
<polyline points="479.2,511.6 479.2,527.1" fill="none" stroke="#b9c6cc" stroke-width="0.4" />
<polyline points="475.0,517.6 483.5,516.0" fill="none" stroke="#b9c6cc" stroke-width="0.4" />
<polyline points="475.0,522.7 483.5,521.1" fill="none" stroke="#b9c6cc" stroke-width="0.4" />
<polygon points="486.5,510.1 494.0,507.7 494.0,522.6 486.5,525.4" fill="#93b6d4" />
<polygon points="486.5,510.1 490.2,508.9 490.2,517.2 486.5,518.5" fill="#7a9fc4" />
<polyline points="490.2,508.9 490.2,524.0" fill="none" stroke="#b9c6cc" stroke-width="0.4" />
<polyline points="486.5,515.2 494.0,512.7" fill="none" stroke="#b9c6cc" stroke-width="0.4" />
<polyline points="486.5,520.3 494.0,517.6" fill="none" stroke="#b9c6cc" stroke-width="0.4" />
<polygon points="439.5,537.0 445.0,539.0 445.0,553.6 439.5,551.6" fill="#93b6d4" />
<polygon points="439.5,537.0 442.2,538.0 442.2,546.0 439.5,545.0" fill="#7a9fc4" />
<polyline points="442.2,538.0 442.2,552.6" fill="none" stroke="#b9c6cc" stroke-width="0.4" />
<polyline points="439.5,541.8 445.0,543.9" fill="none" stroke="#b9c6cc" stroke-width="0.4" />
<polyline points="439.5,546.7 445.0,548.8" fill="none" stroke="#b9c6cc" stroke-width="0.4" />
<polygon points="447.0,539.6 454.5,541.4 454.5,556.0 447.0,554.2" fill="#93b6d4" />
<polygon points="447.0,539.6 450.8,540.5 450.8,548.6 447.0,547.7" fill="#7a9fc4" />
<polyline points="450.8,540.5 450.8,555.1" fill="none" stroke="#b9c6cc" stroke-width="0.4" />
<polyline points="447.0,544.5 454.5,546.3" fill="none" stroke="#b9c6cc" stroke-width="0.4" />
<polyline points="447.0,549.4 454.5,551.2" fill="none" stroke="#b9c6cc" stroke-width="0.4" />
<polygon points="456.5,541.7 464.5,542.4 464.5,557.0 456.5,556.3" fill="#93b6d4" />
<polygon points="456.5,541.7 460.5,542.1 460.5,550.1 456.5,549.8" fill="#7a9fc4" />
<polyline points="460.5,542.1 460.5,556.7" fill="none" stroke="#b9c6cc" stroke-width="0.4" />
<polyline points="456.5,546.6 464.5,547.3" fill="none" stroke="#b9c6cc" stroke-width="0.4" />
<polyline points="456.5,551.5 464.5,552.1" fill="none" stroke="#b9c6cc" stroke-width="0.4" />
<polygon points="467.0,542.4 475.5,541.6 475.5,556.2 467.0,557.0" fill="#93b6d4" />
<polygon points="467.0,542.4 471.2,542.0 471.2,550.0 467.0,550.4" fill="#7a9fc4" />
<polyline points="471.2,542.0 471.2,556.6" fill="none" stroke="#b9c6cc" stroke-width="0.4" />
<polyline points="467.0,547.2 475.5,546.5" fill="none" stroke="#b9c6cc" stroke-width="0.4" />
<polyline points="467.0,552.1 475.5,551.3" fill="none" stroke="#b9c6cc" stroke-width="0.4" />
<polygon points="478.0,541.1 486.5,538.9 486.5,553.5 478.0,555.7" fill="#93b6d4" />
<polygon points="478.0,541.1 482.2,540.0 482.2,548.0 478.0,549.2" fill="#7a9fc4" />
<polyline points="482.2,540.0 482.2,554.6" fill="none" stroke="#b9c6cc" stroke-width="0.4" />
<polyline points="478.0,546.0 486.5,543.7" fill="none" stroke="#b9c6cc" stroke-width="0.4" />
<polyline points="478.0,550.9 486.5,548.6" fill="none" stroke="#b9c6cc" stroke-width="0.4" />
<polygon points="489.0,538.0 495.5,535.2 495.5,549.8 489.0,552.6" fill="#93b6d4" />
<polygon points="489.0,538.0 492.2,536.6 492.2,544.6 489.0,546.0" fill="#7a9fc4" />
<polyline points="492.2,536.6 492.2,551.2" fill="none" stroke="#b9c6cc" stroke-width="0.4" />
<polyline points="489.0,542.8 495.5,540.0" fill="none" stroke="#b9c6cc" stroke-width="0.4" />
<polyline points="489.0,547.7 495.5,544.9" fill="none" stroke="#b9c6cc" stroke-width="0.4" />
<polygon points="406.7,482.7 412.0,480.0 431.3,491.5 433.0,526.0 440.5,551.2 427.8,556.5 423.5,545.0 406.7,540.7 402.3,512.6 406.7,511.0" fill="#a8936a" />
<polygon points="402.3,512.6 406.7,511.0 430.4,525.7 433.0,527.0 440.5,551.2 427.8,556.5 423.5,545.0 406.7,540.7" fill="#b09c72" />
<polygon points="410.0,488.0 413.5,489.5 414.5,517.0 411.0,515.0" fill="#47282a" />
<polygon points="421.0,494.0 425.0,496.0 426.0,522.0 422.0,520.0" fill="#47282a" />
<polygon points="414.5,500.0 417.5,501.5 418.0,516.0 415.0,514.5" fill="#b9d4e6" />
<polygon points="413.7,531.9 417.2,533.5 417.7,541.5 414.2,540.0" fill="#e09a30" />
<polygon points="418.8,534.6 422.3,536.2 422.8,543.8 419.3,542.3" fill="#e09a30" />
<polygon points="1086.5,55.0 1139.6,81.8 1086.0,107.4 1033.0,81.8" fill="#00a7d3" />
<polygon points="1033.0,81.8 1086.0,107.4 1086.0,173.2 1033.0,147.2" fill="#38c772" />
<polygon points="1086.0,107.4 1139.6,81.8 1139.6,147.2 1086.0,173.2" fill="#ff7f2a" />
<g font-family="Liberation Sans, sans-serif" fill="#fff" font-size="50"><text transform="matrix(1,0.485,0,1,1048.3,139.3)" textLength="20" lengthAdjust="spacingAndGlyphs" style="font-size:50.5px">L</text><text transform="matrix(1,-0.478,0,1,1101,150.6)" textLength="21" lengthAdjust="spacingAndGlyphs" style="font-size:50.5px">F</text><text transform="matrix(1.374,-0.602,1.27,0.614,1089,94.4)" style="font-size:30px">T</text></g>
<circle cx="1180.5" cy="385" r="25" fill="#e4e4e4" opacity=".55"/>
<polygon points="1175.0,377.0 1185.0,385.2 1175.0,393.6" fill="#c9c9c9" />
<polygon points="1185.0,377.0 1187.2,377.0 1187.2,393.6 1185.0,393.6" fill="#c9c9c9" />
<!--/SCENE-->
</svg>

<div id="hdr">
  <div id="logo"><span>ProCS</span></div>
  <div class="mi" style="left:135px">Project<i style="left:72px"></i></div>
  <div class="mi" style="left:235px;letter-spacing:-.3px">File<i style="left:50px"></i></div>
  <div class="mi" style="left:335px">Actions<i style="left:74px"></i></div>
  <div class="mi" style="left:435px">Export<i style="left:69px"></i></div>
  <div class="mi" style="left:535px">Settings<i style="left:77px"></i></div>
  <div id="admin">admin</div>
  <div id="signout">Sign Out</div>
  <svg id="ulogo" viewBox="0 0 44 38"><!--ULOGO--><path d="M3.6,22.6 C1.2,12 12,1.2 27,2.4 C32.5,2.9 37,4.6 40,7.2" fill="none" stroke="#3a6bb5" stroke-width="1.1"/>
<path d="M7,26.4 C12.5,25.2 17.5,28.5 20,35.2 C24,30.8 32.5,28.2 39,33.6 C32,30.6 25.5,32 20.2,36.6 C17.5,30.8 13,27.2 7,26.4 Z" fill="#2358a8" stroke="#2358a8" stroke-width=".5"/>
<circle cx="29.5" cy="8.1" r="1.9" fill="#857b2d"/>
<path d="M22.6,14.6 L26.6,12 L31.2,11.2 L37.6,8.4 L38.5,10 L34,13.8 L34.2,19.5 L34.8,28.6 L32.7,28.9 L31.2,21.6 L27.6,29.8 L25.4,29.2 L27.6,19.5 L27.4,14.2 L23.3,15.9 Z" fill="#857b2d"/>
<circle cx="16.6" cy="13.1" r="1.4" fill="#857b2d"/>
<path d="M11.6,15.9 L15.6,15.1 L18.8,15.3 L22.8,14.2 L23.3,15.4 L19.5,17 L19.6,21 L21.4,26.6 L20.1,27 L17.7,22.6 L14.6,24.6 L13.6,23.8 L16,20.6 L16,16.8 L11.9,17 Z" fill="#857b2d"/><!--/ULOGO--></svg>
</div>

<!--TOOLBAR-->
<div class="tb" style="top:97px"><svg viewBox="0 0 62 35.5"><g fill="none" stroke="#fff" stroke-width="1.8"><circle cx="26" cy="14.1" r="1.6"/><circle cx="26" cy="21.1" r="1.6"/></g><path d="M27.4,15.2 L35.4,22.6 M27.4,20 L35.4,12.6" stroke="#fff" stroke-width="2.6" stroke-linecap="round" fill="none"/></svg></div>
<div class="tb" style="top:139px"><svg viewBox="0 0 62 35.5"><path d="M20.6,17.8 Q29.5,7.6 38.4,17.8 Q29.5,28 20.6,17.8 Z" fill="#fff"/><circle cx="29.5" cy="17.8" r="3.5" fill="#1b1c1d"/><circle cx="29.5" cy="17.8" r="2.2" fill="#fff"/><circle cx="30" cy="17.5" r="1.4" fill="#1b1c1d"/><path d="M23.2,10.9 L33.8,24.8" stroke="#1b1c1d" stroke-width="3.8"/><path d="M23.6,10.8 L34.2,24.6" stroke="#fff" stroke-width="1.6" stroke-linecap="round"/></svg></div>
<div class="tb" style="top:181px"><svg viewBox="0 0 62 35.5"><circle cx="29.5" cy="12.5" r="2.0" fill="#fff"/><path d="M27.3,15.2 H31.7 Q33,15.2 33,16.5 V21 Q33,21.8 32.2,21.8 H31.9 V25.3 H27.1 V21.8 H26.8 Q26,21.8 26,21 V16.5 Q26,15.2 27.3,15.2 Z" fill="#fff"/></svg></div>
<div class="tb" style="top:223px"><svg viewBox="0 0 62 35.5"><path d="M35.4,10.6 Q37.6,10.4 37,12.6 Q34.6,17.4 30.6,21 L27.6,18.5 Q31,14 35.4,10.6 Z" fill="#fff"/><path d="M26.8,19.4 L29.8,21.9 Q30.6,25.8 26.2,25.6 Q23.2,25.4 21.6,22.9 Q23.8,22.8 24,21 Q24.6,18.8 26.8,19.4 Z" fill="#fff"/></svg></div>
<div class="tb" style="top:265px"><svg viewBox="0 0 62 35.5"><path d="M20.6,17.8 Q29.5,7.4 38.4,17.8 Q29.5,28.2 20.6,17.8 Z" fill="#fff"/><circle cx="29.5" cy="17.6" r="3.7" fill="#1b1c1d"/><circle cx="29.5" cy="17.6" r="2.7" fill="#fff"/><circle cx="29.9" cy="17.9" r="2.0" fill="#1b1c1d"/><circle cx="29.9" cy="17.9" r="1.2" fill="#fff"/></svg></div>
<div class="tb" style="top:307px"><svg viewBox="0 0 62 35.5"><path d="M23.2,15.2 Q22,14.2 22.6,13.2 Q23.6,12 25,13 V12.6 Q25.2,11.4 26.6,11.5 Q27.6,11.6 27.8,12.3 Q28.2,11.2 29.6,11.3 Q30.8,11.4 31,12.3 Q31.6,11.5 32.8,11.7 Q33.9,12 34,13 Q34.8,12.5 35.8,13 Q37,13.6 37,15 V20 Q37,21.6 36,22.6 V24.2 H27.2 V22.8 Q25,21.6 23.6,19.4 Q22,17 23.2,15.2 Z" fill="#fff"/></svg></div>
<div class="tb" style="top:349px"><svg viewBox="0 0 62 35.5"><circle cx="29.2" cy="17.9" r="5.2" fill="none" stroke="#fff" stroke-width="2"/><path d="M29.2,10.4 V14.8 M29.2,21 V25.4 M21.7,17.9 H26.1 M32.3,17.9 H36.7" stroke="#fff" stroke-width="2"/><path d="M29.2,15.6 V20.2 M26.9,17.9 H31.5" stroke="#fff" stroke-width="1.2"/></svg></div>
<div class="tb" style="top:391px"><svg viewBox="0 0 62 35.5"><ellipse cx="29.5" cy="22.4" rx="6.8" ry="2.5" fill="none" stroke="#fff" stroke-width="1.5"/><circle cx="29.5" cy="11.9" r="1.9" fill="#fff"/><path d="M27.6,14.3 H31.4 Q32.6,14.3 32.6,15.5 V19.6 H31.6 V23.6 H27.4 V19.6 H26.4 V15.5 Q26.4,14.3 27.6,14.3 Z" fill="#fff" stroke="#1b1c1d" stroke-width=".5"/></svg></div>
<div class="tb" style="top:433px"><svg viewBox="0 0 62 35.5"><path d="M25.2,14.2 A5.7,5.7 0 1 1 24.4,21.8" fill="none" stroke="#fff" stroke-width="2.3"/><path d="M21.9,10.6 L22.1,17.3 L28.6,17 Z" fill="#fff"/></svg></div>
<div class="tb" style="top:475px"><svg viewBox="0 0 62 35.5"><path d="M30.2,11.3 Q31,10.7 31.8,11.4 L36.6,16 Q37.3,16.8 36.6,17.6 L32,22 H25.6 L22.4,19 Q21.6,18.2 22.4,17.4 Z" fill="#fff"/><path d="M25.9,17.3 L30,21 L26.3,21 L24,18.9 Z" fill="#1b1c1d"/><path d="M24.6,22.9 H37" stroke="#fff" stroke-width="1.5"/></svg></div>
<!--/TOOLBAR-->

<div id="gbar"></div><div id="gbar2"></div>
<div id="pwrap">
 <div id="acc">
  <div class="at" style="top:-1px;border-top:0;letter-spacing:0.17px"><i></i>Browser</div>
  <div class="at" style="top:40px;letter-spacing:-0.55px"><i></i>Saved Searches</div>
  <div class="at" style="top:81px;letter-spacing:-0.29px"><i></i>Saved Views</div>
  <div class="at" style="top:122px;letter-spacing:-0.21px"><i></i>Saved Search Properties</div>
  <div class="at on" style="top:163px;letter-spacing:-0.39px"><i></i>Properties</div>
  <!--PROPS-->
  <div class="pr" style="top:215px;letter-spacing:-0.41px;">Name:</div>
  <div class="pv" style="top:215px;letter-spacing:-0.25px;">Walls 6</div>
  <div class="pv" style="top:234px;letter-spacing:-0.25px;">Walls 6</div>
  <div class="pv" style="top:253px;letter-spacing:0.25px;">1428412</div>
  <div class="pr" style="top:280px;letter-spacing:-0.54px;">Type:</div>
  <div class="pv" style="top:280px;letter-spacing:0.2px;">IfcWall</div>
  <div class="pr" style="top:307px;">ExternalId:</div>
  <div class="pv" style="top:307px;letter-spacing:0.25px;">3960265</div>
  <div class="pr" style="top:333px;font-weight:bold;font-size:15px;color:#1b1b1b;letter-spacing:-0.17px;">Attributes</div>
  <div class="pr" style="top:361px;letter-spacing:-0.22px;">COBie.Component.Name</div>
  <div class="pv" style="top:361px;letter-spacing:-0.28px;">Walls 6_Walls 6</div>
  <div class="pr" style="top:388px;letter-spacing:-0.36px;">COBie.Component.Space</div>
  <div class="pv" style="top:388px;letter-spacing:-0.58px;">n/a</div>
  <div class="pr" style="top:415px;letter-spacing:-0.15px;">COBie.CreatedBy</div>
  <div class="pv" style="top:415px;letter-spacing:-0.4px;">daniel.kazado@procs.com.tr</div>
  <div class="pr" style="top:442px;letter-spacing:-0.14px;">COBie.CreatedOn</div>
  <div class="pv" style="top:442px;letter-spacing:0.2px;">2019-10-08T14:25:13</div>
  <div class="pr" style="top:469px;letter-spacing:-0.04px;">Category</div>
  <div class="pv" style="top:469px;letter-spacing:-0.08px;">Walls</div>
  <div class="pr" style="top:496px;letter-spacing:-0.17px;">Family</div>
  <div class="pv" style="top:496px;letter-spacing:-0.21px;">Walls 6: Walls 6</div>
  <div class="pr" style="top:523px;letter-spacing:-0.36px;">Family and Type</div>
  <div class="pv" style="top:523px;letter-spacing:-0.21px;">Walls 6: Walls 6</div>
  <div class="pr" style="top:550px;letter-spacing:-0.65px;">Type</div>
  <div class="pv" style="top:550px;letter-spacing:-0.21px;">Walls 6: Walls 6</div>
  <div class="pr" style="top:577px;letter-spacing:-0.42px;">Type Id</div>
  <div class="pv" style="top:577px;letter-spacing:-0.21px;">Walls 6: Walls 6</div>
  <div class="pr" style="top:604px;letter-spacing:-0.38px;">Phase Created</div>
  <div class="pv" style="top:604px;letter-spacing:0.06px;">New Construction</div>
  <div class="pr" style="top:631px;letter-spacing:-0.25px;">Reference</div>
  <div class="pv" style="top:631px;letter-spacing:-0.15px;">Walls 6:Walls 6</div>
  <!--/PROPS-->
  <div class="at" style="top:677px;letter-spacing:0.04px"><i></i>Documents</div>
 </div>
</div>
<div id="hsb"></div>
<div id="vsb"><i style="top:7px;border-bottom:4.2px solid #505050"></i><b></b><i style="top:784px;border-top:4.2px solid #505050"></i></div>
<div id="btm"></div>
</body>
</html>
